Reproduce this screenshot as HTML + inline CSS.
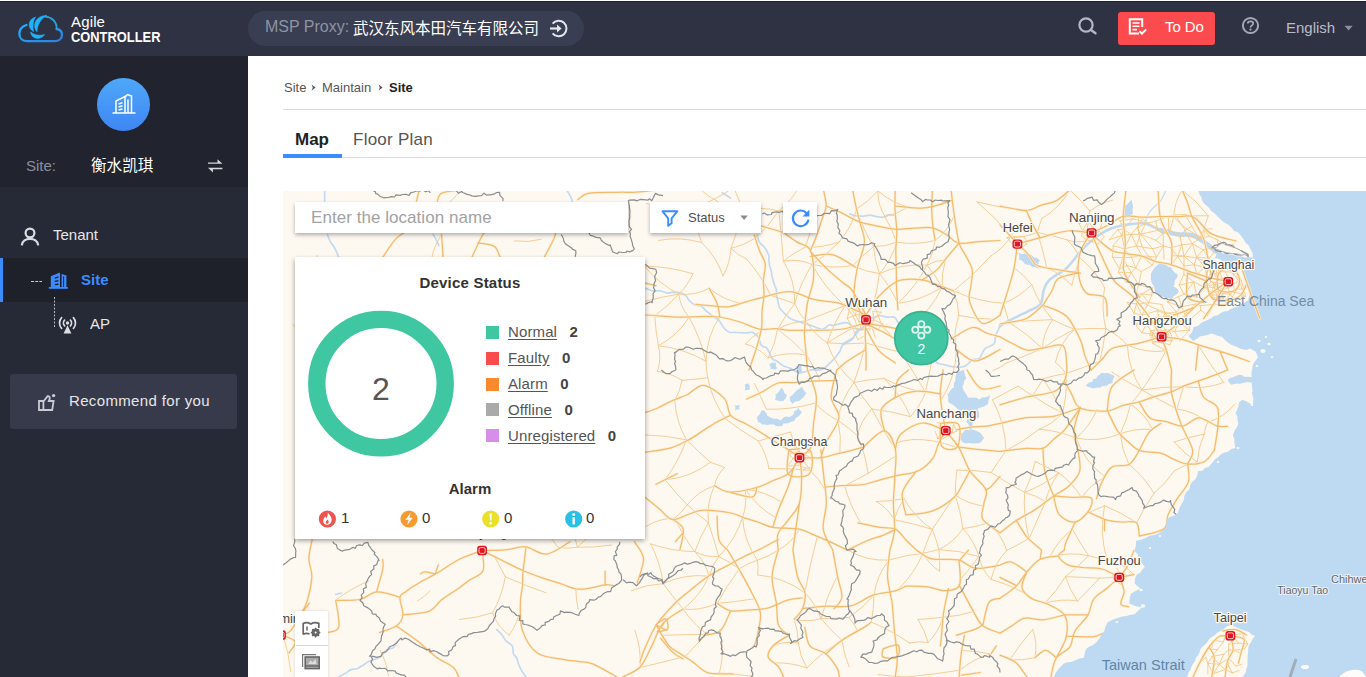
<!DOCTYPE html>
<html lang="en">
<head>
<meta charset="utf-8">
<title>Agile Controller</title>
<style>
*{box-sizing:border-box;margin:0;padding:0}
html,body{width:1366px;height:677px;overflow:hidden;background:#fff;font-family:"Liberation Sans","Noto Sans CJK SC",sans-serif;}
body{position:relative}
#topbar{position:absolute;left:0;top:1px;width:1366px;height:55px;background:#2f3243;border-top:1px solid #1f212b}
#sidebar{position:absolute;left:0;top:56px;width:248px;height:621px;background:#262936}
#sidetop{position:absolute;left:0;top:0;width:248px;height:131px;background:#21242e}
.t{position:absolute;white-space:nowrap;line-height:1}
svg{position:absolute;overflow:visible}
#pill{position:absolute;left:248px;top:11px;width:336px;height:35px;border-radius:18px;background:#3a3e52}
#todo{position:absolute;left:1118px;top:12px;width:97px;height:33px;border-radius:3px;background:#fb4b4e}
#content{position:absolute;left:248px;top:56px;width:1118px;height:621px;background:#fff}
#map{position:absolute;left:283px;top:191px;width:1083px;height:486px;background:#fdf9f1;overflow:hidden}
#mapin{position:absolute;left:0;top:-1px;width:1083px;height:487px}
.card{position:absolute;background:#fff;box-shadow:0 1px 5px rgba(0,0,0,.35)}
#avatar{position:absolute;left:97px;top:22px;width:53px;height:53px;border-radius:50%;background:linear-gradient(180deg,#4ea8f7,#3f86f5)}
#activerow{position:absolute;left:0;top:202px;width:248px;height:44px;background:#1e202a;border-left:3px solid #3b8cff}
#recbtn{position:absolute;left:10px;top:318px;width:227px;height:55px;border-radius:3px;background:#373a4b}
.leg{position:absolute;left:191px;width:13px;height:13px;margin-top:-0.5px}
.ll{position:absolute;left:213px;font-size:15px;line-height:1;color:#555;white-space:nowrap;letter-spacing:0.12px}
.ll u{text-decoration:underline;text-underline-offset:2px}
.ll b{color:#444;margin-left:12.5px}
</style>
</head>
<body>
<div id="topbar"></div>
<svg style="left:0;top:0" width="170" height="56" viewBox="0 0 170 56">
<defs><linearGradient id="lg" x1="0" y1="0" x2="1" y2="1"><stop offset="0" stop-color="#1fb2ff"/><stop offset="1" stop-color="#2b7fe0"/></linearGradient></defs>
<path d="M26.4 25 C21.5 26.6 19.4 30.2 19.4 34 C19.4 38.6 23 41.2 27.5 41.2 L54.5 41.2 C59 41.2 62 38.6 62 34.8 C62 31.6 59.6 29.4 56.6 29" fill="none" stroke="url(#lg)" stroke-width="2.3" stroke-linecap="round"/>
<path d="M56.6 29 C57.2 21.5 51 16.6 45 16.6" fill="none" stroke="#2aa3d6" stroke-width="1.8" stroke-linecap="round"/>
<path d="M35.6 17 C27.6 19.4 27.2 28 33.6 31.6 C32.4 26.4 32.8 21.2 35.6 17 Z M46.8 15.4 C35.8 15.6 31.6 25 37 31.8 C37.4 24.6 40.6 18.8 46.8 15.4 Z M30.6 32 C31.4 39.6 41 40.4 44.6 34.6 C39.6 36 34.6 35.2 30.6 32 Z" fill="#1fb2ff" stroke="#1fb2ff" stroke-width="0.6" stroke-linejoin="round"/>
</svg>
<div class="t" style="left:71px;top:14.4px;font-size:15px;color:#fff;letter-spacing:0.15px">Agile</div>
<div class="t" style="left:71px;top:30px;font-size:14px;font-weight:bold;color:#fff;transform:scaleX(.92);transform-origin:0 0">CONTROLLER</div>
<!-- PILL -->

<div id="pill"></div>
<svg style="left:548px;top:18px" width="22" height="22" viewBox="548 18 22 22">
<path d="M552.6 23.6 A7.8 7.8 0 1 1 552.6 33.4" fill="none" stroke="#e3e4ec" stroke-width="2"/>
<path d="M550 28.5 H558" stroke="#e3e4ec" stroke-width="2.2" fill="none"/>
<path d="M557 24.6 L561.6 28.5 L557 32.4 Z" fill="#e3e4ec"/>
</svg>
<div class="t" style="left:265px;top:19px;font-size:16px;color:#8f93a3">MSP Proxy:</div>
<div class="t" style="left:353px;top:20.5px;font-size:15.5px;color:#fff">武汉东风本田汽车有限公司</div>
<svg style="left:1076px;top:14px" width="24" height="24" viewBox="1076 14 24 24">
<circle cx="1086" cy="25" r="6.6" fill="none" stroke="#b4b7c4" stroke-width="2.2"/>
<path d="M1091 30 L1095.5 33.3" stroke="#b4b7c4" stroke-width="2.4" stroke-linecap="round"/>
</svg>
<svg style="left:1240px;top:15px" width="22" height="22" viewBox="1240 15 22 22">
<circle cx="1250.5" cy="25.5" r="7.6" fill="none" stroke="#a4a7b5" stroke-width="2"/>
<path d="M1247.8 23.6 C1247.8 20.6 1253.2 20.6 1253.2 23.6 C1253.2 25.4 1250.5 25.4 1250.5 27.4" fill="none" stroke="#a4a7b5" stroke-width="1.8"/>
<circle cx="1250.5" cy="29.6" r="1.1" fill="#a4a7b5"/>
</svg>
<svg style="left:1344px;top:25px" width="10" height="6" viewBox="0 0 10 6"><path d="M0.5 0.8 H8.7 L4.6 5.6 Z" fill="#8b8e9e"/></svg>
<div id="todo"></div>
<svg style="left:1127px;top:17px" width="22" height="20" viewBox="1127 17 22 20">
<path d="M1139 33.5 H1129.8 V19.2 H1142.2 V27" fill="none" stroke="#fff" stroke-width="2"/>
<path d="M1132.5 23 H1139.5 M1132.5 26.3 H1139.5 M1132.5 29.6 H1137" stroke="#fff" stroke-width="1.6" fill="none"/>
<path d="M1139.6 31.2 L1142 33.6 L1146.2 29.4" fill="none" stroke="#fff" stroke-width="2"/>
</svg>
<div class="t" style="left:1165px;top:19px;font-size:15px;color:#fff;letter-spacing:-0.1px">To Do</div>
<div class="t" style="left:1286px;top:20px;font-size:15px;color:#b9bcc8">English</div>

<div id="sidebar">
  <div id="sidetop"></div>
  <div id="avatar"></div>
  <div class="t" style="left:26px;top:101.5px;font-size:15px;color:#8b8f9c">Site:</div>
  <div class="t" style="left:91px;top:101.5px;font-size:15.6px;color:#fff">衡水凯琪</div>
  <div class="t" style="left:53px;top:171px;font-size:15px;color:#e6e6e6">Tenant</div>
  <div id="activerow"></div>
  <div class="t" style="left:81px;top:216px;font-size:15px;font-weight:bold;color:#3b8cff">Site</div>
  <div class="t" style="left:90px;top:260px;font-size:15px;color:#e6e6e6">AP</div>
  <div id="recbtn"></div>
  <div class="t" style="left:69px;top:337px;font-size:15px;color:#e6e6e6;letter-spacing:0.35px">Recommend for you</div>
  <svg style="left:0;top:0" width="248" height="621" viewBox="0 56 248 621">
<!-- avatar building -->
<g fill="none" stroke="#fff" stroke-width="1.5">
<path d="M112.5 113 H135.5"/>
<path d="M116 113 V101 L125 96.5 V113"/>
<path d="M125 97 L127.5 94.5 L131.5 96 V113"/>
<path d="M128 113 V99.5"/>
<path d="M118.5 104 L122.5 102.6 M118.5 107 L122.5 105.8 M118.5 110 L122.5 109"/>
</g>
<!-- swap -->
<g fill="#d5d6de">
<path d="M208 162.4 H217.5 V159.2 L222.4 163.8 H208 Z"/>
<path d="M222.4 169.2 H212.9 V172.4 L208 167.8 H222.4 Z"/>
</g>
<!-- tenant -->
<g fill="none" stroke="#dcdde3" stroke-width="2.2">
<circle cx="30" cy="233" r="4.4"/>
<path d="M21.8 245.3 C22.5 236.6 37.5 236.6 38.2 245.3"/>
</g>
<!-- dashes -->
<path d="M31 281.5 H42" stroke="#c8c9d0" stroke-width="1" stroke-dasharray="3 1.2"/>
<path d="M54.5 297 V327" stroke="#b8b9c2" stroke-width="1" stroke-dasharray="2 1.5"/>
<!-- site icon -->
<g fill="#3b8cff">
<rect x="48.8" y="287" width="19" height="1.8"/>
<path d="M50.8 276.2 L60 272.4 V287.5 H50.8 Z"/>
<path d="M61.6 274 L66.4 275.6 V287.5 H61.6 Z"/>
</g>
<g stroke="#1e202a" stroke-width="1.4">
<path d="M54.8 278.2 L58.4 277 M54.8 281.4 L58.4 280.6 M54.8 284.6 L58.4 284.2"/>
<path d="M63.6 276.5 V287" stroke-width="1"/>
</g>
<!-- ap icon -->
<g fill="none" stroke="#dcdde3" stroke-width="1.7" stroke-linecap="round">
<path d="M64.6 320.2 A4 4 0 0 0 64.6 325.8"/>
<path d="M70.4 320.2 A4 4 0 0 1 70.4 325.8"/>
<path d="M61.6 317.6 A8 8 0 0 0 61.6 328.4"/>
<path d="M73.4 317.6 A8 8 0 0 1 73.4 328.4"/>
</g>
<circle cx="67.5" cy="323" r="1.7" fill="#dcdde3"/>
<path d="M67.5 325.2 L63.6 333.6 H71.4 Z" fill="#dcdde3"/>
<!-- thumbs up -->
<g fill="none" stroke="#c9cad3" stroke-width="1.8">
<path d="M39 401 H43.4 V410 H39 Z"/>
<path d="M43.4 401.5 L47.6 396.2 C49.4 396 50.2 397.6 49.6 399.2 L48.8 401 H53.6 L52.2 410 H43.4"/>
</g>
<circle cx="53.6" cy="395.6" r="1.7" fill="#c9cad3"/>
</svg>
</div>
<div id="content">
  <div class="t" style="left:36px;top:24.5px;font-size:13px;color:#555">Site</div>
  <svg style="left:63px;top:28px" width="6" height="7" viewBox="0 0 6 7"><path d="M0.6 0.6 L4.6 3.5 L0.6 6.4 L1.8 3.5 Z" fill="#555"/></svg>
  <div class="t" style="left:74px;top:24.5px;font-size:13px;color:#555">Maintain</div>
  <svg style="left:130px;top:28px" width="6" height="7" viewBox="0 0 6 7"><path d="M0.6 0.6 L4.6 3.5 L0.6 6.4 L1.8 3.5 Z" fill="#555"/></svg>
  <div class="t" style="left:141px;top:24.5px;font-size:13px;color:#222;font-weight:bold">Site</div>
  <div style="position:absolute;left:35px;top:53px;width:1083px;height:1px;background:#dcdcdc"></div>
  <div class="t" style="left:47px;top:75px;font-size:17px;color:#222;font-weight:bold">Map</div>
  <div class="t" style="left:105px;top:75px;font-size:17px;color:#555;letter-spacing:0.25px">Floor Plan</div>
  <div style="position:absolute;left:35px;top:101px;width:1083px;height:1px;background:#dcdcdc"></div>
  <div style="position:absolute;left:35px;top:98px;width:59px;height:4px;background:#3b8cff"></div>
</div>
<div id="map"><div id="mapin">
<!-- MAPSVG_START -->
<svg style="left:0;top:0" width="1083" height="487" viewBox="0 0 1083 487">
<rect width="1083" height="487" fill="#fdf9f1"/>
<path d="M869.7 80.4L871.4 77.7L874 75.5L875.8 74.1L876.9 72.4L879.5 73.5L882.3 74.2L885.6 77L887.7 77.1L890.5 81.3L892.2 82.9L894.8 84.8L893.9 88L891.8 90.3L891.4 94.4L890.5 96.6L893.2 98L894.8 99.2L895.6 101.2L894.9 103.3L892.1 105.3L890.4 106.4L889.1 108.9L885.3 108.3L883.2 108.6L880.9 107.1L878.7 106.4L875.9 105.7L873.7 103.1L871.8 101.5L871.6 99.3L870.8 96.1L869.4 94L868.2 91L867.7 89.3L867.9 86.1L868 83.5ZM735.8 63L738.7 64.3L741.8 63.2L743.6 64.3L745.5 64.2L748.5 64.9L750.9 67.5L753.8 67.8L757 70.4L755.5 72.2L755.5 75.8L755.1 78.4L751.4 76.9L748.9 77.1L747.4 75L743.1 74.5L741 73.2L739.5 71L736.1 69.5L736.2 66.4ZM840.3 16.1L843.8 14.7L845.6 12.7L848.6 9.8L849.6 14L850.1 16.7L849.7 18.6L849.6 21.7L850.1 23.2L847.7 25.2L845.3 26.8L841.9 28.8L841.6 26.5L840.9 24.9L841.6 20.7L840.3 18.5ZM944.7 5.4L947.2 3.3L950.8 3.7L952.7 1.3L953.7 2.8L956 5.3L958.8 7.4L955.4 10.7L954.6 10.9L952.9 12.5L950.8 12.3L949.5 9.8L946.3 7.1ZM473.9 227.4L474.8 225.9L477 223.9L478.2 220.7L480.7 220.2L482.3 221.9L483.8 223.8L484.1 225.4L485.9 226.5L487.8 227.5L490.8 228.8L494.8 228.8L497.3 230.4L499.8 228.4L500.8 227.3L503.2 226.4L506.5 227L509.4 225.3L510.6 223.9L511 221.6L514.2 219.8L515.4 217.1L516.3 219.8L518.7 221.8L518.4 223.1L515.7 226.2L514.8 226.7L512.1 228.7L511.3 231.1L507.4 232.1L506.6 232.8L503 233.6L500.1 233.6L499.4 235.9L495.8 236.3L492.9 236L490.9 234.5L487.1 234.5L484.3 234.9L481.6 234.4L479 234.4L477 232.4L475.1 232.3ZM492.3 204.8L494.2 203.6L496.4 200.8L498.5 197.7L500.4 200.1L501.6 203.4L504 204.8L503 208L500.2 211L497.9 211.2L494.3 210.4L491.8 209.5L492.9 207.4ZM506.7 206.9L508.9 205.4L511.6 202.7L513.1 200.8L515.9 199.1L518.9 196.7L521 200.6L523.5 203.5L522.4 204.4L520.1 207.8L519.2 208.2L516.2 210.9L513.4 211.2L510.6 212.7L509.3 213.8L507 210.4ZM486.2 174.1L489.6 172.4L493.1 173L492.8 176L494.2 178.2L492.3 179.4L487.6 179.1L487.3 176.3ZM461.6 194.6L465.1 193.2L466.7 195.7L466.8 199.6L461.7 200.4L462.4 197.7ZM451.3 215.1L453 215.6L457 215L456.2 216.2L456.6 219.8L454.5 219L452.2 221L452.5 217.2ZM512.8 176.1L515.2 176.5L519.1 175.5L518.2 177.8L519.4 182.1L514 183.2L514.1 179.8ZM664.5 204.8L665.2 203.5L666.7 201.5L669 198.4L670.8 197.5L671 193L672.4 190.4L672.4 187.4L673.1 184.6L674.4 181.9L678.4 180.9L680.9 179.6L681.3 182L681.8 184.7L683.4 188.6L681 191.1L681.1 193.1L679.5 196.5L680.4 199.9L681.7 201.8L683.9 205.3L684.7 207.6L688.5 207.7L691 207.6L693.4 207.7L696.5 209.4L699.4 207.2L701.6 207.6L705.7 206.2L707.1 204.3L706.5 207.5L705.5 210.2L705 214L703.9 214.7L699.9 217.1L697.5 217.4L694.3 219L695.9 221.9L696 224.7L696.3 226.9L694.1 228.6L691.6 229.2L689.8 231L689.6 234.3L689.3 237.3L688.5 240.5L685.8 239.3L686.4 236.1L685.3 234.2L683.3 231.8L684.4 228.5L683.4 226L680.2 223.8L678.9 222.7L677.4 221.1L674.9 219.6L673.1 217.5L669.1 214.2L665.8 212.8L665.1 211L665.3 207.8ZM676.8 243.8L679.8 242.8L682.3 240.1L685.6 240.2L687.6 240.3L690.5 239.8L693.2 240.7L694.4 241.3L697.8 243.2L699.9 246.8L701.4 247.7L699.3 250.3L697.9 252.2L695.6 253.2L691.5 253.5L689.6 253.6L686.2 253.1L682.1 253.6L680.2 252.4L677.2 249.5L676.9 246.8ZM802.7 196.1L804.7 193.6L807.5 192.1L809.7 191.9L809.8 189.3L813.4 188.6L814.7 185.6L816.2 185.2L818.2 182.8L820.8 183.3L825.1 183L827.5 184.3L830.3 185.2L831.7 186.2L831.3 187.1L829.4 190.7L829.4 193L826.1 193.9L823.8 195.6L820.5 196.2L819.5 195.7L817 197.7L814.3 197.6L810.5 198.5L809.1 198L805.1 196.8ZM944.7 190.2L947 187.7L949.3 187.6L952.4 186.2L955.2 185.1L958.6 185.1L961.2 186.8L965.2 186.7L967.6 187.1L971.1 186.5L971.3 188.5L972 192.2L969.1 192.8L965.2 191.9L963.6 192.2L959.7 192.9L956.4 193.9L954.8 193.5L951.2 194.1L948.1 194.8L945.7 191.9Z" fill="#bfd9f1"/>
<path d="M439.4 2.7 L447.4 8M474 45.2C474.4 46.4 475.5 50.7 476.7 52.6C477.8 54.5 479.5 54.7 481.1 56.8C482.6 58.9 485.1 63.3 485.8 65.3C486.6 67.3 485.7 67.2 485.8 68.7C485.9 70.3 486 72.6 486.4 74.5C486.7 76.5 487.7 78.5 488.1 80.5C488.6 82.6 488.6 84.6 489.2 87C489.7 89.4 490.8 92.8 491.5 94.9C492.2 97 493 97.6 493.3 99.4C493.7 101.3 493.4 103.8 493.7 105.8C493.9 107.7 494.4 109.2 494.9 111.2C495.4 113.2 495.4 115.5 496.6 117.6C497.8 119.8 500 121.9 502 123.8C504 125.8 506 128 508.6 129.3C511.2 130.7 515.2 131.3 517.6 132.1C520 132.9 520.8 133.3 522.9 134C525.1 134.7 527.7 135.4 530.4 136.3C533.1 137.2 536.6 139.5 539.2 139.3C541.8 139.1 544.1 135.7 546 135C547.9 134.4 548.2 135.7 550.6 135.3C552.9 135 557.8 133.2 560.3 132.9C562.7 132.5 563.7 132.4 565.5 133.2C567.3 134 569 136.7 571.2 137.8C573.3 138.8 576.6 140.7 578.7 139.3C580.7 137.9 582.7 130.9 583.5 129.2M583.5 129.2C584.9 128.9 589.8 127.7 592 127.1C594.1 126.5 594.5 125.5 596.4 125.5C598.4 125.5 601.4 126.8 603.9 127.1C606.4 127.4 609.6 126.4 611.4 127.2C613.2 128 613.6 130.5 614.7 131.9C615.9 133.4 617.3 134.3 618.4 135.9C619.5 137.4 620 139.5 621.3 141.2C622.6 142.9 624.2 144.7 626.1 146.2C627.9 147.6 630.7 148.5 632.4 150.1C634 151.7 634.2 153.6 635.9 155.7C637.5 157.8 640.6 161 642.4 162.8C644.3 164.5 645.1 164.5 647.1 166.2C649.1 167.9 652.4 171.7 654.6 173.1C656.8 174.5 658.3 174 660.4 174.5C662.6 175.1 665.3 176 667.3 176.4C669.3 176.8 670.3 176.9 672.5 177C674.8 177 678.4 177.3 680.6 176.7C682.8 176.1 684.3 174.5 685.7 173.3C687.1 172.1 687.3 170.5 689.1 169.7C690.9 168.8 694.5 169.9 696.6 168.1C698.7 166.3 699.4 161.3 701.8 158.9C704.2 156.5 709.3 155.9 711.1 153.7C713 151.4 712 147.6 712.6 145.4C713.3 143.1 714.4 141.9 715.1 140.3C715.8 138.7 716.7 136.6 717 135.9M357 98.9C358 98.9 360.7 98.3 362.8 98.6C365 98.9 367.4 100.4 369.8 100.8C372.3 101.2 375 100.4 377.5 100.8C379.9 101.2 382.4 102.9 384.5 103.1C386.6 103.3 387.9 102.1 390.2 102.1C392.6 102.2 396.1 102.5 398.3 103.1C400.4 103.8 401.8 104.9 403.2 106.2C404.6 107.5 405.2 109.7 406.7 111.1C408.2 112.6 410.3 114.2 412.2 115C414.1 115.8 416.3 115 418.1 116C420 117.1 421.4 119.3 423.5 121.2C425.7 123 429 125.7 431.1 127.2C433.1 128.7 434 128.1 435.7 130C437.4 131.8 439.4 136.3 441.2 138.3C443 140.4 444.3 141.6 446.3 142.2C448.3 142.9 450.4 142.2 453.2 142.4C455.9 142.5 460.1 142.9 462.8 143C465.5 143 467.3 141.7 469.4 142.4C471.5 143.1 473.8 144.9 475.3 147.1C476.8 149.2 477 153.7 478.4 155.5C479.7 157.3 482.2 156.5 483.6 157.9C485 159.4 485.9 162.3 486.9 164.1C487.9 166 488.3 167.9 489.6 169.1C490.8 170.3 492.7 170.3 494.5 171.5C496.3 172.6 498.1 174.7 500.3 175.8C502.5 177 505.7 177.4 507.9 178.5C510 179.5 511.7 181.3 513.4 182C515.1 182.8 515.8 183.1 517.8 182.9C519.8 182.7 523.5 181.2 525.4 180.7C527.3 180.2 527.5 179.9 529.3 179.8C531.2 179.7 534.4 180.5 536.5 180.1C538.7 179.8 540.2 178.9 542.2 177.5C544.2 176 547.1 172.8 548.7 171.3C550.2 169.8 550.2 170.2 551.6 168.5C553 166.8 555.7 163.1 557 161C558.3 158.9 557.6 157.5 559.2 155.9C560.7 154.3 564.3 152.6 566.2 151.4C568 150.1 569 149.9 570.2 148.2C571.4 146.6 571.9 143.1 573.5 141.3C575.1 139.5 578.3 138.8 579.9 137.3C581.4 135.7 582.5 132.8 583 131.9M577.7 138.3C576.9 139.3 574.4 142.6 573 144.2C571.6 145.9 571.5 146.6 569.2 148.2C566.8 149.9 560.7 153.2 559.1 154.2M567 23.9C567.8 24.2 569.5 25.2 571.8 25.6C574 25.9 578.2 26.2 580.7 26.1C583.2 26 585.2 25.1 587 25.2C588.8 25.2 589.3 25.8 591.5 26.2C593.7 26.5 598 27.5 600.3 27.3C602.6 27.1 603.3 25.2 605.3 24.8C607.2 24.5 611.1 25.2 612.2 25.3M41.7 0 L41.7 11.1M44.5 44.5C44.9 45.7 45.9 49.3 47.1 51.4C48.2 53.6 49.9 54.9 51.4 57.5C52.8 60 54.9 65.2 55.6 66.8M150.2 44.5C150.8 45.6 153 48.9 153.9 50.8C154.8 52.6 155.5 54.8 155.8 55.6M283.7 0C284.4 1.1 286.6 4.5 287.5 6.4C288.4 8.2 289 10.3 289.3 11.1M213.8 439.6C214.6 440.5 217.4 443 219 444.9C220.5 446.8 221.3 449 223 450.9C224.7 452.7 228 453.7 229.3 455.9C230.5 458 229.7 461.8 230.4 463.7C231.1 465.7 232.6 465.7 233.5 467.5C234.4 469.4 234.8 472.4 235.8 474.9C236.8 477.3 238.4 480.3 239.6 482.3C240.8 484.3 242.5 486.2 243 487M114.2 451.3C113.6 452.3 112.2 456.2 110.5 457.6C108.7 459 105.8 458.4 103.7 459.8C101.7 461.2 100 464.4 98.4 465.9C96.7 467.4 95.7 467.7 93.6 468.7C91.5 469.6 87.8 470.4 85.6 471.5C83.3 472.6 82.1 474 80.2 475.2C78.2 476.4 76 477.9 74 478.7C71.9 479.4 69.7 478.9 67.8 479.6C65.9 480.4 64.6 482 62.5 483.3C60.5 484.5 56.8 486.4 55.6 487M52.7 404.4 L58.6 403" fill="none" stroke="#c3daf1" stroke-width="1.7" stroke-linecap="round"/>
<path d="M717 136.1C718.1 135.4 720.7 133.6 723.6 132C726.5 130.4 730.7 128.4 734.2 126.6C737.7 124.8 741 123.4 744.9 121.3C748.7 119.2 754.6 117.7 757.3 114.2C760 110.6 759.3 104.1 760.8 100C762.4 95.9 762.7 93.5 766.6 89.8C770.4 86 778.8 82.4 784 77.7C789.1 73 793.4 66.1 797.4 61.6C801.4 57.2 803.6 54.5 808.1 50.9C812.6 47.3 818.4 42.9 824.2 40.2C830 37.5 836.7 35.9 842.9 34.8C849.2 33.7 855.9 32.6 861.7 33.5C867.5 34.4 872.4 38.4 877.8 40.2C883.1 42 888.5 43.3 893.8 44.2C899.2 45.1 905 44 909.9 45.5C914.8 47.1 919.7 51.1 923.3 53.6C926.9 56 928.7 58.3 931.3 60.3C934 62.3 938 64.8 939.4 65.6" fill="none" stroke="#c2daf1" stroke-width="2.6" stroke-linecap="round"/>
<path d="M877.8 40.2C880.4 40.9 888.5 43.3 893.8 44.2C899.2 45.1 905 44 909.9 45.5C914.8 47.1 919.7 51.1 923.3 53.6C926.9 56 928.7 58.3 931.3 60.3C934 62.3 938 64.8 939.4 65.6" fill="none" stroke="#bfd9f1" stroke-width="4.5" stroke-linecap="round"/>
<path d="M861.7 33.5C862.6 31.5 864.4 25.2 867 21.4C869.7 17.6 875.1 14.3 877.8 10.7C880.4 7.1 882.2 1.8 883.1 0" fill="none" stroke="#c6dcf1" stroke-width="1.3"/>
<path d="M178 0Q172.2 7.4 165.2 13.6M408.7 -10.8Q417.5 1.9 431 9.3M450.7 -2.5Q468.6 -0.4 485.4 -6.9M450.7 -2.5Q441.3 4.1 431 9.3M450.7 -2.5Q456 8.7 459.5 20.5M485.4 -6.9Q501.8 -9.6 518 -6.4M518 -6.4Q509.9 9.6 495.8 20.9M594.9 0.9Q585.4 11.3 573.7 19.1M594.9 0.9Q594.5 15 602.1 26.8M594.9 0.9Q608.3 12.6 625.5 17.3M786.7 0Q776.7 18.1 758.8 28.6M786.7 0Q797.7 9.6 806.9 21M899.2 0Q891.3 12.2 890.6 26.8M899.2 0Q914.1 11 925.2 25.8M311.3 21.8Q320.2 24.2 327.7 29.5M363.2 13.4Q385.6 21.1 408.5 14.9M408.5 14.9Q420.5 15.2 431 9.3M408.5 14.9Q411.6 34.3 418.6 52.5M431 9.3Q443.9 18.3 459.5 20.5M459.5 20.5Q477.7 16 495.8 20.9M459.5 20.5Q455.1 39.9 448 58.4M495.8 20.9Q513.6 17.3 531.7 17.7M495.8 20.9Q486 36.2 472.4 48.1M495.8 20.9Q498.5 46 500.4 71.2M531.7 17.7Q530.1 38.4 521.8 57.4M573.7 19.1Q568.6 37.5 556.2 51.9M573.7 19.1Q579.7 38.9 590.5 56.6M602.1 26.8Q614.4 23.5 625.5 17.3M602.1 26.8Q609 39 613.6 52.2M670.7 26.6Q664.8 41.2 652.1 50.5M694 11.9Q717.2 17.6 740.8 20.8M694 11.9Q712.9 27.3 727.9 46.6M758.8 28.6Q756.2 35.3 754.2 42.3M806.9 21Q817.2 13.2 829.8 10M806.9 21Q804.1 35.8 803.5 50.9M855.9 26.8Q853.3 41.7 858.9 55.8M855.9 26.8Q869.7 36.9 884.9 44.7M890.6 26.8Q907.9 25.3 925.2 25.8M890.6 26.8Q889 36.1 884.9 44.7M890.6 26.8Q903 41.2 920.6 48.2M925.2 25.8Q920 36.4 920.6 48.2M158.6 44.5Q147.7 60.4 147.4 79.6M231.6 50.9Q245.1 52.8 258.2 49.3M375.5 50.4Q397.3 46.3 418.6 52.5M418.6 52.5Q433.5 66.6 440.1 86M448 58.4Q461.1 55.4 472.4 48.1M448 58.4Q447.1 73.1 440.1 86M448 58.4Q454.6 65.5 463.6 68.9M521.8 57.4Q539.6 57.9 556.2 51.9M521.8 57.4Q510.2 62.8 500.4 71.2M556.2 51.9Q543.9 64.7 529.2 74.4M590.5 56.6Q602.5 56.9 613.6 52.2M590.5 56.6Q579.7 65.6 569.7 75.6M590.5 56.6Q591.7 70.5 596.4 83.6M613.6 52.2Q633 55.4 652.1 50.5M613.6 52.2Q608.8 69.9 596.4 83.6M652.1 50.5Q650.2 63.5 644.1 75.1M727.9 46.6Q741.7 48.1 754.2 42.3M727.9 46.6Q720.1 58.7 707.7 66M754.2 42.3Q769.2 45.3 783.8 49.8M754.2 42.3Q760.1 59.5 763.7 77.3M783.8 49.8Q793.5 53.4 803.5 50.9M783.8 49.8Q792.4 57.2 796.6 67.7M858.9 55.8Q862.5 64.9 870.8 70.2M34.1 65.4Q33.2 82 27.7 97.8M68.1 80Q83.7 72.3 100.1 66.8M277.2 85.2Q286.2 98.4 289.8 113.9M311.9 73.6Q315.7 89.8 317.3 106.4M361.5 76.1Q386.3 76.5 409.9 83.8M361.5 76.1Q355.8 93.7 361.3 111.4M361.5 76.1Q375.6 93.7 395.8 104M409.9 83.8Q404.9 95.4 395.8 104M463.6 68.9Q478 85.6 487.9 105.4M500.4 71.2Q515.3 68.3 529.2 74.4M500.4 71.2Q512.7 90.6 511.7 113.6M529.2 74.4Q549.3 79.1 569.7 75.6M529.2 74.4Q517.5 92.7 511.7 113.6M529.2 74.4Q541.6 98.2 562.1 115.7M569.7 75.6Q582.4 81.9 596.4 83.6M596.4 83.6Q619.2 73.2 644.1 75.1M596.4 83.6Q594.5 99.1 590.6 114.3M596.4 83.6Q608 97.1 614.7 113.5M644.1 75.1Q652.6 69.8 662.5 70.1M644.1 75.1Q632.8 96.9 614.7 113.5M644.1 75.1Q652.5 85.5 659.1 97.2M662.5 70.1Q658.1 83.3 659.1 97.2M707.7 66Q690.9 85.3 670.7 101M730.8 77.4Q740.8 84.9 748.7 94.5M763.7 77.3Q777.9 84 788.8 95.2M796.6 67.7Q792.3 81.4 788.8 95.2M796.6 67.7Q812.2 80.1 821.6 97.6M888.5 65.8Q911.9 64 932.2 75.9M51 101.4Q72.5 99.4 93.3 105.3M124.5 110.5Q130.1 125.4 132.1 141.3M230.5 109.7Q238.9 108.5 245.9 103.8M361.3 111.4Q378.4 107.1 395.8 104M395.8 104Q411.8 106 426.1 98.4M395.8 104Q385.1 116.3 371.7 125.7M395.8 104Q397.3 117.3 406.1 127.3M426.1 98.4Q439.9 109.6 457.1 113.4M487.9 105.4Q499.8 109.4 511.7 113.6M511.7 113.6Q502 125.7 494.7 139.3M511.7 113.6Q515.4 123.5 522.8 130.9M562.1 115.7Q542.4 123.2 522.8 130.9M562.1 115.7Q570.8 124 574 135.8M562.1 115.7Q550.6 133 544.2 152.8M590.6 114.3Q595.2 125.3 599.2 136.5M614.7 113.5Q638.8 110.5 659.1 97.2M659.1 97.2Q648.2 121.1 626.7 136.1M670.7 101Q694.5 111.7 720.6 113.3M670.7 101Q675.3 112.8 675.9 125.4M720.6 113.3Q736.8 107.1 748.7 94.5M720.6 113.3Q723 122.8 725.9 132.2M748.7 94.5Q755.8 114 769.6 129.6M821.6 97.6Q817.8 118.3 822.8 138.6M848.6 105.1Q867.9 119.7 891.5 124.8M9.6 134.1Q18.6 146.8 30.8 156.4M334.3 140.2Q343.5 152.7 350.9 166.3M371.7 125.7Q372.6 140.8 375.4 155.7M406.1 127.3Q394.7 145.8 375.4 155.7M406.1 127.3Q417.6 148.1 423 171.3M436.8 126.3Q423.3 146.8 423 171.3M477.4 141.3Q469.2 146.7 462.3 153.8M494.7 139.3Q507.8 131.8 522.8 130.9M494.7 139.3Q492.2 154.4 485.1 167.9M494.7 139.3Q510.4 150.7 523.5 165M522.8 130.9Q531 144.3 544.2 152.8M574 135.8Q558.8 143.8 544.2 152.8M599.2 136.5Q612.1 147 618.1 162.6M675.9 125.4Q692 129.1 708.5 129.2M675.9 125.4Q669.7 142.1 673.4 159.5M725.9 132.2Q747.7 130.5 769.6 129.6M725.9 132.2Q744.2 143.4 759.4 158.5M769.6 129.6Q780.2 135.2 791.4 139.3M769.6 129.6Q760.1 142.5 759.4 158.5M791.4 139.3Q807.1 137.9 822.8 138.6M791.4 139.3Q774.5 147.4 759.4 158.5M791.4 139.3Q776.7 152.7 772.4 172.2M822.8 138.6Q820.8 155.1 816.7 171.3M822.8 138.6Q835.1 144.9 844.4 155.1M856.2 133.8Q873 126 891.5 124.8M61.3 169.1Q65.8 180.8 75.3 188.9M294.3 160.5Q309.5 153.2 326.4 154M326.4 154Q318.3 176 307.8 196.8M375.4 155.7Q400.9 158.3 423 171.3M375.4 155.7Q378.8 168.8 374.4 181.5M423 171.3Q423.1 179.6 424.7 187.8M462.3 153.8Q475.8 157.6 485.1 167.9M485.1 167.9Q503.9 161.3 523.5 165M523.5 165Q531.7 177.1 537.1 190.6M544.2 152.8Q563.4 154.8 582.7 153M544.2 152.8Q551.9 176.5 571 192.5M582.7 153Q600.4 157.8 618.1 162.6M582.7 153Q578.2 173.2 571 192.5M618.1 162.6Q634.2 156 651.5 154.5M618.1 162.6Q630.6 182.2 642.5 202.3M651.5 154.5Q647.8 178.5 642.5 202.3M673.4 159.5Q673 186.9 658.3 210.1M723.5 173Q741.7 166.3 759.4 158.5M723.5 173Q717.4 178 710.1 180.5M772.4 172.2Q778.7 177 783.1 183.6M816.7 171.3Q799.9 177.6 783.1 183.6M844.4 155.1Q862.9 163.7 883.1 160.8M844.4 155.1Q845.1 179.7 859 199.9M883.1 160.8Q872.7 181.3 859 199.9M915.3 155.4Q927 174.7 940.8 192.5M107.7 191.1Q104.7 205 98.8 217.9M244.4 188.9Q260.4 198.8 279.2 199.3M374.4 181.5Q387.8 182.9 399 190.3M399 190.3Q411.9 189.5 424.7 187.8M399 190.3Q397.3 201 391.8 210.5M424.7 187.8Q429 210 442.1 228.4M471.6 193.7Q477.7 206.3 483.4 219.2M571 192.5Q586 189.3 601.2 188.5M571 192.5Q557.8 209.3 554.9 230.5M571 192.5Q578.4 206.8 588.9 219M601.2 188.5Q620.6 199.1 642.5 202.3M601.2 188.5Q618.4 204.8 627.5 226.6M642.5 202.3Q637.3 215.9 627.5 226.6M735 196.2Q722.2 202.9 709.5 209.8M735 196.2Q742.2 201.3 749.7 205.6M760.1 188.8Q771.4 185.2 783.1 183.6M760.1 188.8Q755.1 197.3 749.7 205.6M760.1 188.8Q771.7 204.8 779.5 222.9M783.1 183.6Q784.7 203.5 779.5 222.9M828.8 182.1Q843.5 191.7 859 199.9M859 199.9Q879.6 196.7 900.4 196.7M859 199.9Q853.6 207.4 847.6 214.3M859 199.9Q876.1 210 893.8 218.9M900.4 196.7Q921.1 199.9 940.8 192.5M900.4 196.7Q897.2 207.8 893.8 218.9M191.4 221Q198.2 231.3 207.2 239.6M391.8 210.5Q392.9 231.5 403.4 249.9M442.1 228.4Q457.9 240.9 475.3 251.1M483.4 219.2Q508.2 219.9 532.1 213.2M532.1 213.2Q542 223.9 554.9 230.5M554.9 230.5Q565.3 237.2 574.3 245.5M554.9 230.5Q558.7 246.6 556.9 263M588.9 219Q608.5 221.2 627.5 226.6M588.9 219Q577.8 230.2 574.3 245.5M588.9 219Q598.3 237.1 609.2 254.4M709.5 209.8Q722.5 233.5 723 260.6M749.7 205.6Q763.8 215.7 779.5 222.9M779.5 222.9Q770 234 756.2 239.2M814.1 219.2Q807.2 236.2 793.2 248.1M847.6 214.3Q844.2 229.7 837.3 243.7M847.6 214.3Q862.2 223.9 869.7 239.6M893.8 218.9Q911.1 221.3 924.7 232.2M924.7 232.2Q941.2 227.3 952.2 213.9M924.7 232.2Q921.6 237.8 921.3 244.1M166.5 246.7Q170.3 262.8 182.5 274.1M207.2 239.6Q222.9 242.9 238.4 239M238.4 239Q232.9 259.2 218 274.1M261.4 252.3Q282.9 245.3 304.6 251.3M261.4 252.3Q274.8 262.5 280.3 278.5M333.7 247.9Q347.9 241.7 363.1 245M333.7 247.9Q343.8 266 360.4 278.5M363.1 245Q383.5 245.3 403.4 249.9M403.4 249.9Q395.8 271.4 382.1 289.8M403.4 249.9Q415.2 261.3 427.4 272.3M475.3 251.1Q491.2 246.1 507.4 242.1M475.3 251.1Q483.5 263.7 486 278.6M507.4 242.1Q513.8 263 527.2 280.3M574.3 245.5Q582.6 263.7 585 283.4M609.2 254.4Q619 250.3 629.7 249.5M629.7 249.5Q651.3 248.9 671.5 256.8M723 260.6Q740.8 251.8 756.2 239.2M723 260.6Q715.3 271.4 708.2 282.5M756.2 239.2Q775.4 240.7 793.2 248.1M793.2 248.1Q815.9 252.8 837.3 243.7M793.2 248.1Q801.7 272.2 822.4 287.2M837.3 243.7Q853 237.9 869.7 239.6M837.3 243.7Q838.7 259.5 845.6 273.8M891.2 252Q905.9 246.9 921.3 244.1M891.2 252Q901.1 263.8 914.2 272.2M921.3 244.1Q914.9 257.4 914.2 272.2M65.1 275.7Q80.8 278.5 95.7 272.8M95.7 272.8Q107 271.7 118 274.9M95.7 272.8Q97.9 286 103.8 298M280.3 278.5Q273.6 292.7 260.8 301.6M326.5 278Q334.5 288.4 342.6 298.8M382.1 289.8Q407.4 287.9 427.4 272.3M382.1 289.8Q392.4 303 404.3 314.8M427.4 272.3Q434.5 274.7 441.5 277.4M441.5 277.4Q433.7 285 431.4 295.7M486 278.6Q506.6 278.1 527.2 280.3M527.2 280.3Q536.3 288.6 541.8 299.6M585 283.4Q598.6 274.9 612.2 266.4M585 283.4Q573.5 289.8 561.7 295.7M673.9 280.1Q691.1 279.8 708.2 282.5M673.9 280.1Q672.1 292.4 672.3 305M708.2 282.5Q724.4 293.3 741.6 302.3M752.3 271.5Q763.9 277.5 775.8 282.9M752.3 271.5Q748.6 287.5 741.6 302.3M775.8 282.9Q760.4 295.6 741.6 302.3M775.8 282.9Q766 295.8 762.5 311.7M775.8 282.9Q790 293 798.7 307.9M822.4 287.2Q807.3 293.9 798.7 307.9M845.6 273.8Q860.9 286.4 871.1 303.3M891.3 280.9Q901.8 274 914.2 272.2M891.3 280.9Q882.8 293.5 871.1 303.3M103.8 298Q112.9 315.7 116.9 335.3M260.8 301.6Q272.6 318.4 291.8 325.7M342.6 298.8Q353.4 301.1 362.3 307.6M404.3 314.8Q415 301.1 431.4 295.7M404.3 314.8Q398.9 322.1 392.1 328.1M404.3 314.8Q414.2 324.5 425.4 332.7M431.4 295.7Q423.3 313.3 425.4 332.7M462.2 299.4Q482 300.7 498.3 312.2M462.2 299.4Q464.4 313.7 459.6 327.4M462.2 299.4Q474 317.1 492.6 327.6M561.7 295.7Q566.8 315.9 578.1 333.5M593.3 311.5Q607.2 311.2 621 308.8M593.3 311.5Q604.8 318 611.2 329.6M621 308.8Q614.3 318.3 611.2 329.6M621 308.8Q631.5 327.4 649.3 339.3M672.3 305Q685.2 314.5 701.2 315.9M672.3 305Q660.9 322.2 649.3 339.3M672.3 305Q677.7 321.4 679.9 338.6M741.6 302.3Q752.9 305.2 762.5 311.7M741.6 302.3Q739.9 325.8 746.2 348.4M762.5 311.7Q754.2 330 746.2 348.4M821.6 315.7Q810.2 319.7 800.1 326.3M821.6 315.7Q838.5 322.5 853.6 332.7M821.6 315.7Q815.8 342.7 824 369.1M871.1 303.3Q861.3 317.3 853.6 332.7M228.6 341.6Q237.3 336.3 244.8 329.5M244.8 329.5Q263.4 339.8 275.3 357.6M291.8 325.7Q289.1 341.8 294.5 357.2M319.6 333.8Q306.8 345.3 294.5 357.2M363 336.4Q376.4 328.1 392.1 328.1M392.1 328.1Q399.5 346.3 411.8 361.6M425.4 332.7Q417.2 346.5 411.8 361.6M425.4 332.7Q431 349.4 435.8 366.5M459.6 327.4Q452.6 349.9 435.8 366.5M459.6 327.4Q460.7 351 474.4 370.3M516.5 339.5Q508.8 352.8 495.3 360.1M611.2 329.6Q630.5 333.6 649.3 339.3M649.3 339.3Q644 351.1 639.9 363.3M649.3 339.3Q653.2 349.2 655.9 359.5M679.9 338.6Q692.7 337.2 704.8 332.9M679.9 338.6Q670.9 352.6 655.9 359.5M679.9 338.6Q691.3 350.7 696 366.5M704.8 332.9Q718.6 343.8 723.8 360.5M746.2 348.4Q735.2 354.7 723.8 360.5M789.3 339Q774.8 350.6 766.6 367.3M789.3 339Q796.7 352.8 805.7 365.7M210.8 365.5Q216.9 376 222.3 386.8M275.3 357.6Q284.9 359.1 294.5 357.2M294.5 357.2Q311.8 357.8 329 355M367.5 353.8Q388.9 361.5 411.8 361.6M367.5 353.8Q377.4 372.5 380.3 393.6M411.8 361.6Q423 367.8 435.8 366.5M411.8 361.6Q422.4 371.9 426.1 386.2M435.8 366.5Q428.9 375.4 426.1 386.2M435.8 366.5Q446.5 371.9 456.4 378.8M474.4 370.3Q485.5 366.6 495.3 360.1M474.4 370.3Q464.7 373.1 456.4 378.8M474.4 370.3Q475.7 377.6 474.7 384.9M534.3 346.6Q526.9 374.4 521.8 402.7M564.4 360Q583.6 371.5 605.9 370.1M605.9 370.1Q622.5 364.8 639.9 363.3M605.9 370.1Q593.4 385.6 591 405.4M639.9 363.3Q647.9 361.6 655.9 359.5M639.9 363.3Q631.6 383.6 615.8 398.7M639.9 363.3Q646 374.4 656.7 381.3M655.9 359.5Q676.4 360.3 696 366.5M655.9 359.5Q656.9 370.4 656.7 381.3M696 366.5Q686.4 379.2 676.1 391.3M696 366.5Q698.5 379.9 708.1 389.4M723.8 360.5Q711.8 372.7 708.1 389.4M766.6 367.3Q785.9 361.2 805.7 365.7M805.7 365.7Q814.6 368.5 824 369.1M805.7 365.7Q794.9 377.1 782.4 386.7M824 369.1Q839.9 372.8 851 384.7M52.7 410.3Q67.8 398 85.9 391.1M147 400.8Q141.7 407 134.6 410.9M222.3 386.8Q242.3 395.7 263 402.8M222.3 386.8Q219.2 405.9 209.6 422.8M292.8 398.6Q292.8 409.2 295.2 419.5M348.3 400.7Q363.7 394.3 380.3 393.6M380.3 393.6Q402.2 383.3 426.1 386.2M380.3 393.6Q389.8 406.6 400 419.1M426.1 386.2Q417.3 406 400 419.1M456.4 378.8Q444.1 395.4 434.1 413.4M474.7 384.9Q500.8 387.2 521.8 402.7M521.8 402.7Q532.7 414 538.1 428.7M553.8 386.8Q543.3 406.8 538.1 428.7M591 405.4Q579.9 418.1 565.8 427.4M591 405.4Q590.9 418.8 588.3 432M708.1 389.4Q728.9 395.2 747 406.7M782.4 386.7Q799.5 387.2 816.5 388.2M782.4 386.7Q773.8 401.2 762 413.1M782.4 386.7Q786.6 399.9 794.6 411M816.5 388.2Q833.9 388.2 851 384.7M816.5 388.2Q805.6 399.6 794.6 411M41 429.6Q37.2 438.8 30.4 446.2M176.5 429.5Q193.4 428.1 209.6 422.8M209.6 422.8Q214.3 436.6 226 445.2M237.6 416.5Q235.7 432.5 226 445.2M400 419.1Q417.9 421 434.1 413.4M400 419.1Q409.9 433.6 424 444.2M434.1 413.4Q452.6 412 470.9 408.8M511.2 429.3Q524.8 432.5 538.1 428.7M511.2 429.3Q515.3 440.8 515.2 452.9M538.1 428.7Q552 428.4 565.8 427.4M538.1 428.7Q547.7 440.5 559.1 450.6M565.8 427.4Q571.7 433.7 575 441.7M588.3 432Q608.5 440.5 626.4 453M635 429.5Q647.4 428.8 659.8 427.2M635 429.5Q641.8 440.2 645.1 452.4M659.8 427.2Q675.9 426.5 691.1 421.3M659.8 427.2Q656 441.9 645.1 452.4M762 413.1Q778.1 408.3 794.6 411M0 445.4Q5.9 462.9 7.7 481.3M97.4 460.3Q103.6 472.3 105.6 485.7M351.8 440.1Q358.4 458.3 357.2 477.6M379.6 445.3Q401.8 444.7 424 444.2M424 444.2Q412.6 454.9 402.2 466.5M436.8 439.9Q442.4 461.5 436.4 483M489.9 455.9Q502.1 450.6 515.2 452.9M515.2 452.9Q516.8 466.4 523.9 478M559.1 450.6Q539.3 461.5 523.9 478M559.1 450.6Q560.7 464.2 566.1 476.8M626.4 453Q635.7 450.6 645.1 452.4M679.5 460.5Q693.8 461.1 708 463.9M749.7 439.4Q737.2 453.9 726.6 469.9M749.7 439.4Q755 453.2 751.8 467.8M357.2 477.6Q379.8 472.2 402.2 466.5M436.4 483Q453.3 484.4 470.1 486.3M491 472.9Q507.9 472.2 523.9 478M595.3 484.6Q609.6 486.6 624.1 487M624.1 487Q650.6 484.3 676.9 480.2M676.9 480.2Q690.5 468.4 708 463.9M726.6 469.9Q739.4 470.5 751.8 467.8" fill="none" stroke="#f6cd97" stroke-width="1" stroke-linecap="round"/>
<path d="M837 30.9L849.8 28.9M837 30.9L840.5 39.2M849.8 28.9L858.4 30.8M849.8 28.9L840.5 39.2M858.4 30.8L854 37.7M858.4 30.8L862.4 33.8M872.9 31L885.4 26.1M872.9 31L862.4 33.8M872.9 31L874.7 40.4M885.4 26.1L892.5 25.1M885.4 26.1L885.8 39M892.5 25.1L901.9 24.4M892.5 25.1L902.1 40.3M901.9 24.4L914.1 28.3M901.9 24.4L908.9 36.1M914.1 28.3L921.2 39.1M834.8 39.6L840.5 39.2M834.8 39.6L826.3 49.8M834.8 39.6L838.8 45.3M840.5 39.2L838.8 45.3M840.5 39.2L848.2 44.4M854 37.7L862.4 33.8M854 37.7L848.2 44.4M854 37.7L857.4 44.2M862.4 33.8L857.4 44.2M874.7 40.4L857.4 44.2M874.7 40.4L880 43.4M885.8 39L880 43.4M885.8 39L897 47M902.1 40.3L908.9 36.1M902.1 40.3L897 47M902.1 40.3L903.8 44.8M908.9 36.1L916.2 49.1M921.2 39.1L929.2 38.9M921.2 39.1L916.2 49.1M921.2 39.1L926.2 46.1M826.3 49.8L838.8 45.3M838.8 45.3L848.2 44.4M838.8 45.3L830.1 55.8M838.8 45.3L841.5 58.8M848.2 44.4L857.4 44.2M848.2 44.4L841.5 58.8M848.2 44.4L853.5 55.9M857.4 44.2L872.9 50.3M857.4 44.2L853.5 55.9M857.4 44.2L869.6 58.8M872.9 50.3L880 43.4M872.9 50.3L880.5 55.9M880 43.4L880.5 55.9M897 47L903.8 44.8M897 47L898.8 54.8M903.8 44.8L916.2 49.1M903.8 44.8L909.3 53.7M916.2 49.1L926.2 46.1M916.2 49.1L909.3 53.7M926.2 46.1L934.3 49.7M934.3 49.7L935.3 57.2M934.3 49.7L943 55.1M830.1 55.8L841.5 58.8M830.1 55.8L829.5 67.3M841.5 58.8L853.5 55.9M841.5 58.8L839.7 67.7M841.5 58.8L848.5 67.3M853.5 55.9L869.6 58.8M853.5 55.9L858.9 65.7M869.6 58.8L880.5 55.9M869.6 58.8L873.5 67.2M880.5 55.9L887.9 57.9M880.5 55.9L873.5 67.2M880.5 55.9L881 69.1M887.9 57.9L898.8 54.8M887.9 57.9L894.6 66.4M898.8 54.8L909.3 53.7M898.8 54.8L894.6 66.4M898.8 54.8L901 66.2M909.3 53.7L920.1 59.8M909.3 53.7L901 66.2M909.3 53.7L913.7 67.1M920.1 59.8L935.3 57.2M920.1 59.8L913.7 67.1M920.1 59.8L926.2 68.1M935.3 57.2L943 55.1M935.3 57.2L926.2 68.1M943 55.1L951 54.6M829.5 67.3L839.7 67.7M829.5 67.3L836.5 78.7M839.7 67.7L848.5 67.3M839.7 67.7L836.5 78.7M839.7 67.7L844.1 75.6M848.5 67.3L858.9 65.7M848.5 67.3L852.6 77.9M858.9 65.7L873.5 67.2M858.9 65.7L852.6 77.9M858.9 65.7L869.2 75.3M873.5 67.2L869.2 75.3M894.6 66.4L901 66.2M894.6 66.4L889.7 73M894.6 66.4L901 76M901 66.2L901 76M901 66.2L911.2 74.8M913.7 67.1L926.2 68.1M913.7 67.1L911.2 74.8M913.7 67.1L921.9 77.4M926.2 68.1L921.9 77.4M926.2 68.1L933 77M836.5 78.7L844.1 75.6M836.5 78.7L835.3 82.3M844.1 75.6L852.6 77.9M844.1 75.6L848.2 82.7M852.6 77.9L848.2 82.7M852.6 77.9L858.3 81.6M869.2 75.3L858.3 81.6M901 76L911.2 74.8M901 76L900.9 84.3M911.2 74.8L921.9 77.4M911.2 74.8L913.9 84.3M921.9 77.4L933 77M921.9 77.4L913.9 84.3M921.9 77.4L923.7 87.4M933 77L936.6 81.6M835.3 82.3L848.2 82.7M835.3 82.3L843.1 92M848.2 82.7L843.1 92M848.2 82.7L855.7 95M858.3 81.6L855.7 95M900.9 84.3L896.2 95M900.9 84.3L910.8 92M913.9 84.3L923.7 87.4M923.7 87.4L936.6 81.6M923.7 87.4L921.9 97.4M923.7 87.4L931.1 94.1M936.6 81.6L949.3 82M936.6 81.6L941 93M949.3 82L957.4 93.7M843.1 92L855.7 95M855.7 95L869.3 98M855.7 95L853 104.1M869.3 98L858.9 104M869.3 98L868.8 105M896.2 95L910.8 92M896.2 95L901 104.4M910.8 92L921.9 97.4M910.8 92L901 104.4M910.8 92L913.9 107.3M921.9 97.4L931.1 94.1M921.9 97.4L913.9 107.3M921.9 97.4L928.5 102.3M931.1 94.1L941 93M931.1 94.1L928.5 102.3M931.1 94.1L935.8 101.6M957.4 93.7L952 102.6M957.4 93.7L960.3 103.9M853 104.1L858.9 104M853 104.1L853.5 113.9M858.9 104L868.8 105M858.9 104L853.5 113.9M858.9 104L865.7 112.7M868.8 105L865.7 112.7M895.5 106.5L901 104.4M895.5 106.5L884.6 111.9M895.5 106.5L898.7 116.7M901 104.4L913.9 107.3M928.5 102.3L935.8 101.6M928.5 102.3L931.5 114.2M935.8 101.6L952 102.6M935.8 101.6L931.5 114.2M935.8 101.6L944.5 114.7M952 102.6L960.3 103.9M952 102.6L944.5 114.7M844.2 112.5L853.5 113.9M844.2 112.5L850.9 122.8M853.5 113.9L865.7 112.7M853.5 113.9L850.9 122.8M853.5 113.9L858.9 125.3M865.7 112.7L878.8 114.4M865.7 112.7L858.9 125.3M878.8 114.4L882.3 123.6M884.6 111.9L898.7 116.7M884.6 111.9L893.5 122M898.7 116.7L912.8 114M898.7 116.7L893.5 122M898.7 116.7L902 123.9M912.8 114L917.5 115.7M912.8 114L902 123.9M917.5 115.7L931.5 114.2M917.5 115.7L917.8 120.1M931.5 114.2L944.5 114.7M931.5 114.2L924.5 125.6M850.9 122.8L858.9 125.3M850.9 122.8L853.5 135.9M858.9 125.3L874.5 120.7M858.9 125.3L853.5 135.9M874.5 120.7L882.3 123.6M874.5 120.7L876.4 130.4M882.3 123.6L893.5 122M882.3 123.6L876.4 130.4M882.3 123.6L888.9 129.5M893.5 122L896.2 132M902 123.9L896.2 132M902 123.9L906.9 129.6M917.8 120.1L924.5 125.6M917.8 120.1L906.9 129.6M853.5 135.9L858.8 142.8M863.5 133.6L858.8 142.8M863.5 133.6L869.7 144.2M876.4 130.4L888.9 129.5M876.4 130.4L869.7 144.2M876.4 130.4L882.6 139.8M888.9 129.5L896.2 132M896.2 132L906.9 129.6M896.2 132L891.6 141.5M896.2 132L906.2 140.1M906.9 129.6L906.2 140.1M858.8 142.8L869.7 144.2M869.7 144.2L882.6 139.8M869.7 144.2L869.4 153.2M882.6 139.8L891.6 141.5M882.6 139.8L879.3 149.4M882.6 139.8L888.9 150.9M891.6 141.5L906.2 140.1M891.6 141.5L897.1 150.8M906.2 140.1L897.1 150.8M869.4 153.2L879.3 149.4M869.4 153.2L883.4 161M879.3 149.4L888.9 150.9M879.3 149.4L883.4 161M931.9 74.8L939.4 75.1M931.9 74.8L933.2 78.8M939.4 75.1L933.2 78.8M939.4 75.1L940.4 78.3M929.6 80.1L925.9 87.3M929.6 80.1L933.5 88.4M933.2 78.8L940.4 78.3M933.2 78.8L933.5 88.4M940.4 78.3L947.4 80.7M940.4 78.3L943.7 84.4M947.4 80.7L954.2 81.4M947.4 80.7L950.5 84.9M954.2 81.4L950.5 84.9M954.2 81.4L958.1 90.4M925.9 87.3L933.5 88.4M925.9 87.3L928.2 91.8M933.5 88.4L939.1 88.4M933.5 88.4L933.2 92.8M939.1 88.4L941.4 93.2M943.7 84.4L949 94.5M950.5 84.9L958.1 90.4M928.2 91.8L933.2 92.8M928.2 91.8L923.6 96.7M933.2 92.8L931.4 97.8M933.2 92.8L939.6 100.4M941.4 93.2L939.6 100.4M941.4 93.2L945 97.5M949 94.5L958.1 90.4M949 94.5L945 97.5M949 94.5L952.5 99.4M958.1 90.4L952.5 99.4M958.1 90.4L960.8 98.8M923.6 96.7L931.4 97.8M923.6 96.7L925.9 104.2M931.4 97.8L933.8 105.3M939.6 100.4L945 97.5M939.6 100.4L940 103.5M945 97.5L947.1 104.4M952.5 99.4L960.8 98.8M952.5 99.4L947.1 104.4M960.8 98.8L958.2 104.7M960.8 98.8L962.5 106.5M925.9 104.2L933.8 105.3M925.9 104.2L932.9 108.3M933.8 105.3L940 103.5M933.8 105.3L932.9 108.3M933.8 105.3L939.7 110M940 103.5L947.1 104.4M940 103.5L939.7 110M947.1 104.4L943.3 109.5M947.1 104.4L952.3 110.1M958.2 104.7L962.5 106.5M958.2 104.7L952.3 110.1M958.2 104.7L959.6 108.6M962.5 106.5L959.6 108.6M932.9 108.3L939.7 110M939.7 110L943.3 109.5M952.3 110.1L959.6 108.6M796 33.5L805.5 30.6M796 33.5L799.7 40.7M805.5 30.6L812 30.5M805.5 30.6L799.7 40.7M805.5 30.6L810.2 39.2M812 30.5L810.2 39.2M819.4 32.1L816.2 41M799.7 40.7L810.2 39.2M799.7 40.7L798.6 45.8M799.7 40.7L809.8 46.6M810.2 39.2L809.8 46.6M816.2 41L809.8 46.6M816.2 41L821.2 47M798.6 45.8L802.2 49.2M802.2 49.2L809.8 46.6M802.2 49.2L809.7 51.9M809.8 46.6L809.7 51.9M821.2 47L815.2 53.8M809.7 51.9L815.2 53.8M566.8 116.5L575.2 114.2M566.8 116.5L572.3 125M566.8 116.5L564.3 128.5M575.2 114.2L572.3 125M575.2 114.2L576.4 124.5M586.2 113.5L589.9 116.9M586.2 113.5L576.4 124.5M572.3 125L576.4 124.5M572.3 125L564.3 128.5M572.3 125L576 131.6M576.4 124.5L576 131.6M576.4 124.5L585.9 131.3M590 121.4L598.5 122.2M590 121.4L590.5 129.8M598.5 122.2L590.5 129.8M564.3 128.5L569.1 136.8M576 131.6L585.9 131.3M576 131.6L578.6 140M585.9 131.3L590.5 129.8M585.9 131.3L578.6 140M585.9 131.3L588.9 137.4M590.5 129.8L600.1 134.1M590.5 129.8L588.9 137.4M600.1 134.1L594.9 139.3M569.1 136.8L578.6 140M569.1 136.8L574.9 149.6M578.6 140L588.9 137.4M588.9 137.4L594.9 139.3M588.9 137.4L581.4 145.8M588.9 137.4L592.5 147.4M574.9 149.6L581.4 145.8M515.5 255.3L516.4 261.8M506.1 264.2L516.4 261.8M506.1 264.2L510.2 268.6M516.4 261.8L519.9 263.4M516.4 261.8L510.2 268.6M516.4 261.8L516.8 269.2M519.9 263.4L528 262.2M519.9 263.4L516.8 269.2M519.9 263.4L528.5 268.5M528 262.2L528.5 268.5M510.2 268.6L516.8 269.2M510.2 268.6L504.5 276M516.8 269.2L528.5 268.5M516.8 269.2L516.2 275.3M528.5 268.5L529.1 277.5M504.5 276L516.2 275.3M516.2 275.3L522.7 278.1M522.7 278.1L529.1 277.5M522.7 278.1L517.8 282.5M878.6 134.2L877.7 139.9M868.1 140.4L877.7 139.9M868.1 140.4L867 145M868.1 140.4L872.6 146.5M877.7 139.9L883.5 145M887 142.2L883.5 145M887 142.2L889.8 148.3M867 145L872.6 146.5M867 145L870.2 151.2M872.6 146.5L879.3 152.9M883.5 145L879.3 152.9M889.8 148.3L886.9 154.7M870.2 151.2L879.3 152.9M879.3 152.9L886.9 154.7M833.7 378.4L837.6 383.5M829.2 383.2L837.6 383.5M829.2 383.2L831 389.1M837.6 383.5L843.9 385.3M837.6 383.5L831 389.1M837.6 383.5L841.6 388.6M831 389.1L841.6 388.6M831 389.1L837.7 394.5M661 230.6L661.5 232.3M654.3 232.8L661.5 232.3M661.5 232.3L657.2 244.3M661.5 232.3L669.1 242.9M670.6 233.9L669.1 242.9M670.6 233.9L673.5 241.4M652.2 241.3L654.7 248.4M657.2 244.3L654.7 248.4M657.2 244.3L660.5 248.6M669.1 242.9L673.5 241.4M669.1 242.9L660.5 248.6M654.7 248.4L660.5 248.6M730.2 43.8L724.1 47.8M724.1 47.8L731.4 47.1M724.1 47.8L732.4 57.7M731.4 47.1L741.6 46.9M731.4 47.1L732.4 57.7M741.6 46.9L743.8 54.1M732.4 57.7L734.5 64.2M737.1 58.2L743.8 54.1" fill="none" stroke="#f6c988" stroke-width="0.9" stroke-linecap="round"/>
<path d="M362.3 125C365.2 125.1 373.9 125.7 379.7 126.1C385.6 126.4 391.2 127 397.3 127.1C403.4 127.2 409.9 126.5 416.4 126.5C422.8 126.5 429.4 126.1 436.1 127C442.9 127.9 450.1 129.9 456.8 132C463.6 134 470.6 138 476.5 139.1C482.3 140.3 486.6 138.5 491.7 138.7C496.9 138.9 502.2 140 507.3 140.3C512.5 140.6 517.2 140.2 522.7 140.2C528.2 140.2 534.3 140.4 540.4 140.2C546.6 140 552.7 140 559.7 139C566.6 138 576 134.4 582.2 133.9C588.4 133.3 591.9 135 596.9 135.7C601.9 136.4 609.7 137.8 612.2 138.3M412.8 114.3C415.6 114.6 424.2 115.4 429.6 115.8C435.1 116.2 439.8 117.5 445.5 116.8C451.2 116.1 458 113.2 464 111.6C470 109.9 474.4 108.5 481.5 106.9C488.6 105.2 498.6 101.3 506.7 101.7C514.8 102 523.8 107.6 530 109.2C536.2 110.9 539.2 110.7 543.9 111.4C548.7 112.2 551.9 111.5 558.4 113.8C564.9 116.1 578.9 123.1 583 125M471.3 45.2C472.1 47.7 474.4 55.2 476.2 60C478 64.8 481.5 68.9 482.2 73.9C482.9 78.9 480.6 84.8 480.4 90.1C480.2 95.4 481.2 100.5 481 105.8C480.7 111.1 479.4 116.3 479 121.8C478.6 127.2 479.5 132.2 478.5 138.3C477.5 144.5 475.3 151.9 473.2 158.8C471.1 165.8 467.2 176.5 466 180M500.6 42.5C502.8 44.1 509.2 49 513.7 51.9C518.2 54.9 524.6 54.4 527.4 60.4C530.2 66.4 531.1 79.2 530.5 88.1C530 97 525.8 105 524.3 113.9C522.8 122.9 521.7 134 521.5 141.7C521.2 149.5 522.3 154.2 522.8 160.6C523.3 167 524.2 176.8 524.5 180M569.7 0C570.2 2.6 571.6 10.3 572.8 15.8C574 21.3 575.6 26.7 577 32.8C578.4 38.9 581.9 44.9 581.4 52.6C580.9 60.4 575.8 70.2 574.1 79.2C572.4 88.3 570.2 98.5 571.5 107.1C572.7 115.7 579.7 124.4 581.5 130.9C583.3 137.3 581.9 140.9 582.2 145.6C582.4 150.3 582.8 153.2 582.9 158.9C583.1 164.7 583 176.5 583 180M612.2 0C612.2 3.3 611.8 13.3 612 20C612.3 26.8 613.7 34 613.8 40.6C614 47.3 612.9 53.5 612.8 60C612.8 66.6 613.2 73.2 613.3 79.8C613.5 86.3 613.3 92.7 613.6 99.3C613.9 106 614.7 116.3 614.9 119.6M527.2 61.2C528.9 63.1 534.4 69 537.8 72.6C541.3 76.1 544.1 79.1 547.7 82.4C551.4 85.7 556 89.6 559.6 92.6C563.2 95.6 565.3 95 569.2 100.4C573.1 105.8 580.7 120.9 583 125M527.2 66.5C530.8 66.2 541.7 62.9 549.2 64.7C556.8 66.4 568.5 75 572.4 77.1M543.1 16C545.8 17.1 553.6 20.5 559 23.1C564.5 25.8 569.9 29.5 575.8 31.7C581.7 33.9 588.2 34.8 594.4 36.1C600.5 37.4 606.7 38.9 612.8 39.3C619 39.6 625.3 38.3 631.4 38.1C637.4 37.8 644 36.8 649.3 37.8C654.6 38.9 659 42.1 663.4 44.6C667.7 47.2 670 51.8 675.5 53C681.1 54.2 689.7 52 696.6 51.6C703.5 51.2 713.6 50.7 717 50.5M612.2 16C616.6 16.3 631.2 18.3 638.2 18.2C645.1 18.1 648.9 16.6 653.9 15.3C658.8 14.1 665.7 11.4 668.1 10.6M649.5 0C649.3 3.1 648.6 12.7 648.6 18.7C648.7 24.8 649.3 31.1 649.9 36.4C650.5 41.7 651.8 48.2 652.1 50.5M668.1 0C668.6 4.3 670 17 671.3 25.9C672.7 34.8 674.3 46.6 676.2 53.3C678.2 60 680.8 61.7 682.9 66.1C685.1 70.6 688.4 74.9 689.2 79.9C690 84.9 688.3 90.7 687.9 96C687.5 101.3 684.7 105.4 686.6 111.6C688.5 117.8 694.1 130.8 699.1 133.2C704.2 135.5 714 126.7 717 125.4M583 125C585.2 121.8 590.9 111.6 596.3 105.9C601.7 100.2 608.3 93.6 615.4 90.9C622.5 88.2 632.2 89.1 638.8 89.8C645.3 90.5 649.4 93.1 654.7 95C660.1 96.9 668.1 100 670.7 101M638.8 90.4C641.4 88.6 649.8 83.6 654.1 79.6C658.4 75.6 661 70.8 664.7 66.4C668.3 62 674.2 55.4 676.1 53.2M583 134.3C585.4 135.3 592.8 138.3 597.6 140.8C602.5 143.2 609.8 147.5 612.2 148.9M668.1 148.9C671.7 147 683.7 138.5 689.6 137.5C695.5 136.5 699 141.5 703.6 143C708.2 144.6 714.8 146.2 717 146.8M426.1 98.4C427.5 100.9 432.4 108.9 434.1 113.5C435.9 118.2 436.3 124.2 436.8 126.3M362.3 93.1 L373 95.7M540.5 0C540.9 2.6 543.4 10.7 543.1 15.7C542.8 20.8 540.3 25.2 538.6 30.4C536.9 35.6 535 41.8 533.1 47C531.2 52.1 528.2 58.8 527.2 61.2M500.6 42.5 L474 34.6M583 159.5C580 161.4 569.7 167.3 564.8 170.7C559.9 174.1 555.6 178.5 553.8 180M583 138.3C585.1 141.9 590.9 154.6 595.7 160.4C600.6 166.2 609.5 170.8 612.2 172.8M673.4 159.5C676.5 161.4 684.7 171 692 171C699.3 171 712.8 161.4 717 159.5M734.4 53.6C738.3 52.6 749.6 49.7 757.9 47.6C766.3 45.5 776.1 41.8 784.5 41C792.9 40.2 804.2 42.6 808.1 42.9M808.1 42.9C809.8 44.4 814.4 49 818 52C821.7 55 825.5 59 830 61C834.5 63 840.1 63 845 63.9C849.9 64.8 854.8 65 859.6 66.3C864.4 67.7 869 70.4 873.7 71.8C878.5 73.1 881.9 72.8 888 74.6C894 76.4 903.3 80.5 909.9 82.7C916.6 84.9 922 86.5 927.8 87.8C933.6 89.2 941.9 90.6 944.7 91.1M808.1 42.9C809.8 46.6 814.6 57.4 818.2 65.1C821.8 72.8 826.3 83.6 829.9 89.1C833.4 94.7 836.3 95.3 839.7 98.3C843.1 101.3 845.7 102.2 850.3 107.2C854.9 112.2 862.7 121.8 867.3 128.4C871.9 135 876 143.8 877.8 146.8M877.8 146.8C880.6 144.7 889.1 138.8 894.5 134.1C899.9 129.4 904.9 123.4 910.1 118.6C915.2 113.8 919.5 110 925.3 105.4C931.1 100.8 941.5 93.5 944.7 91.1M734.4 53.6C733.8 58 732.6 71.3 730.6 80.2C728.7 89.1 725.2 99.2 722.9 106.8C720.6 114.3 718 122.3 717 125.4M734.4 53.6C736.2 55.4 742 60.8 745.3 64.4C748.7 68.1 749.2 72.9 754.3 75.5C759.3 78.1 768.7 78.5 775.8 79.8C783 81.1 793.8 82.5 797.4 83.1M808.1 42.9C806.4 45.9 800 54.2 797.8 60.8C795.7 67.4 794.4 75.6 795.3 82.6C796.1 89.6 798.6 98.5 803 102.7C807.4 106.8 818.1 103.6 821.6 107.5C825.2 111.3 823.8 122.9 824.2 125.9M717 16.1C721.4 16.8 736.7 20.6 743.5 20.5C750.2 20.4 752.7 17.1 757.7 15.4C762.7 13.8 768.6 13.2 773.5 10.6C778.3 8 784.5 1.8 786.7 0M717 34.8 L734.4 53.6M842.9 0C842.5 4.6 840.4 18.7 840.3 27.5C840.2 36.4 842.2 44.4 842.3 53.1C842.3 61.8 839.7 72.8 840.5 79.5C841.4 86.3 844.8 88.9 847.4 93.5C850 98.1 854.8 104.9 856.3 107.2M875.1 0C875.4 4.4 875.8 19.8 877.1 26.5C878.3 33.3 880.7 35.9 882.6 40.3C884.6 44.8 887.7 47.3 888.6 53.1C889.6 58.8 888.5 71.4 888.5 75M899.2 0C900.1 2.2 903.1 8.8 904.8 13.4C906.5 17.9 906.7 21.9 909.3 27.6C911.8 33.3 917.5 40.5 920.2 47.6C922.8 54.7 923.8 63.1 925.3 69.9C926.7 76.7 928.1 85.3 928.7 88.4M808.1 42.9C810.9 41.6 819.5 38.1 824.8 35.3C830.2 32.6 834.5 27.8 840.1 26.4C845.6 25 851.8 27 858.1 27.1C864.4 27.1 871.9 26.6 877.9 26.5C883.9 26.5 888.6 26.6 894.1 26.7C899.6 26.8 905 24.4 910.7 27.2C916.4 30 921.2 39.6 928.2 43.6C935.2 47.5 948.7 49.7 952.8 50.9M759.9 115.2C763.8 117 776.9 120.3 783.2 126C789.4 131.7 794.1 143 797.2 149.6C800.3 156.2 800.1 160.5 801.9 165.6C803.8 170.6 807.1 177.6 808.1 180.1M759.9 115.2C757 117.5 750.1 125.6 742.9 128.7C735.8 131.8 721.3 133.1 717 134M759.9 115.2C761.3 112.9 766.1 105.6 768.7 101.2C771.3 96.7 771.1 91.6 775.4 88.6C779.7 85.6 791.5 84 794.7 83.1M717 146.8C719.2 148 725.8 151.8 730.4 154C735 156.3 739.1 159.6 744.4 160.2C749.7 160.8 756.2 158.4 762.2 157.7C768.2 157 776.9 152.4 780.5 156.1C784.1 159.8 783.4 176 784 180M877.8 146.8C878.7 149.2 881.8 155.6 883.6 161.1C885.4 166.7 887.7 176.9 888.5 180M877.8 146.8C874 147.9 863.4 151.5 855.4 153.3C847.5 155.2 836 155.4 830 158C823.9 160.6 822.9 165.3 819.3 169C815.6 172.7 810 178.2 808.1 180.1M877.8 146.8C881.3 147.2 892.5 148 898.7 149.3C904.9 150.6 908.5 152.6 914.8 154.6C921.1 156.6 930 159.2 936.4 161.2C942.8 163.2 948.2 165 953.1 166.7C958.1 168.5 964 170.7 966.2 171.5M915.3 155.4 L912.6 180.1M944.7 91.1C942.6 94.6 935.7 105.9 931.7 112.1C927.7 118.4 922.5 125.9 920.6 128.6M904.6 83.1C904.6 87.1 902 102.1 904.7 107.1C907.3 112 918 111.6 920.6 112.5M959.5 80.4C960.3 82.6 963.2 89.3 964.7 93.8C966.2 98.3 966.4 101.6 968.4 107.4C970.5 113.2 975.5 125.1 976.9 128.6M936.7 160.8 L944.7 180M934 91.1C934.4 89.7 934.3 84.6 936.2 82.6C938.1 80.5 942.5 79 945.4 79C948.3 79 951.9 80.4 953.7 82.6C955.5 84.7 956.5 89.1 956.4 91.9C956.4 94.7 955.1 97.7 953.2 99.4C951.4 101.1 948.4 102 945.4 102C942.5 102.1 937.6 101.7 935.7 99.9C933.8 98 934.3 92.6 934 91.1M923.3 91.1C923.8 88.9 922.6 81 926.2 78C929.8 75.1 939.3 72.8 945 73.2C950.8 73.6 958.2 79.2 960.8 80.4M923.3 91.1C924.2 93.9 925 104.6 928.6 107.8C932.2 111 940.2 111 945.1 110.5C950 110 954.7 108.1 958 104.9C961.3 101.7 963.7 93.4 964.8 91.1M904.6 83.1 L923.3 91.1M867 128.6C870.6 128.1 881.5 127.4 888.6 125.6C895.8 123.8 906.4 119.2 909.9 117.9M743.8 21.4C744.8 23.7 747.7 30.6 750 35.1C752.2 39.5 756 46 757.2 48.2M362.3 222.5C364.4 221.8 370.5 219.9 374.9 218C379.2 216 383.4 213.3 388.3 211.1C393.1 208.8 398.8 207.3 404.2 204.7C409.5 202.1 414.4 194.7 420.5 195.3C426.7 195.9 436.7 203.4 441.2 208.4C445.8 213.4 444.2 221.2 447.7 225.4C451.3 229.6 457.7 231 462.4 233.6C467.1 236.2 471.1 238.4 475.9 241.3C480.6 244.2 485.9 247.8 491 251C496.1 254.2 502.2 257.7 506.5 260.5C510.7 263.3 514.9 266.5 516.5 267.7M362.3 262.4C366.6 261.6 380.9 259.8 388.1 257.8C395.3 255.7 400.3 252.8 405.6 249.9C410.9 247.1 415.5 243.6 420.1 240.6C424.7 237.7 428.9 234.9 433.4 232.3C438 229.8 445.1 226.4 447.4 225.2M362.3 307.6C364.6 309.5 371.8 315.2 376.2 318.8C380.7 322.5 384.3 328.5 389.1 329.5C394 330.4 399.9 326.1 405.1 324.5C410.3 323 413 320.4 420.1 320.2C427.2 319.9 441 321.8 447.9 323C454.7 324.3 456.7 326.4 461.3 327.9C465.8 329.4 470.2 330.4 474.9 332C479.6 333.6 482.6 336.1 489.5 337.3C496.4 338.5 509.4 337.9 516.3 339.2C523.1 340.5 526.1 343 530.7 344.9C535.2 346.7 538.1 347.9 543.7 350.4C549.4 352.9 560.9 358.4 564.4 360M373 294.3 L394.2 283.7M431.4 295.7C434 296.7 439.5 301.8 446.6 302.1C453.6 302.5 466.7 299.4 473.9 297.5C481.1 295.6 484.3 293.1 489.7 290.7C495 288.3 501.5 287 506 283.2C510.4 279.4 514.8 270.3 516.5 267.7M447.4 302.3C451.1 303.1 464.9 307.8 469.3 306.9C473.8 306 473.2 298.6 474 297M396.9 360C397.4 356.5 401.4 344.1 400.1 338.9C398.8 333.7 390.8 330.6 388.9 328.9M434.1 326.2C434.4 330.1 434.1 344 435.9 349.6C437.6 355.3 443.3 358.3 444.7 360.1M489.9 336.9C490.9 333.9 493.2 325.8 495.7 319.1C498.2 312.5 502.4 304.1 505 297C507.6 289.8 509.3 281.1 511.2 276.3C513.1 271.4 515.6 269.2 516.5 267.7M516.5 267.7C516.9 270.8 518.7 278.7 518.6 286.3C518.6 294 518.4 306.3 516.3 313.5C514.1 320.8 509 324.6 505.5 329.7C501.9 334.8 496.6 339.3 494.9 344.3C493.2 349.4 495.2 357.5 495.3 360.1M516.5 267.7C520.1 267.7 532.1 268.4 538.2 267.7C544.2 267.1 547.9 265.2 553 264C558.2 262.8 564.4 261.4 568.9 260.3C573.5 259.1 578.4 257.6 580.3 257.1M537.8 259.8C538.3 264.3 539.9 278 540.8 286.9C541.7 295.7 543.4 303.9 543.3 312.7C543.3 321.4 539.2 331.4 540.3 339.3C541.3 347.2 548.2 356.6 549.8 360.1M516.5 312.9C516 316.8 514.3 328.3 513.2 336.1C512.1 344 510.4 356.1 509.9 360.1M524.5 180C525.9 184.3 532.2 196.9 533.2 205.7C534.2 214.5 531.5 224.2 530.6 232.7C529.7 241.3 530.2 251.3 527.9 257.1C525.5 262.9 518.4 266 516.5 267.7M553.8 180C552.8 184.5 547.9 199.3 548.2 207.3C548.6 215.2 556.8 220.3 555.9 227.8C555.1 235.3 546.2 245.6 543.2 252.2C540.2 258.9 538.7 265.2 537.8 267.7M463.4 209.2C466.1 208 474.5 204.2 479.8 201.5C485 198.8 489.8 194.5 495 193C500.1 191.5 505.2 192.9 510.6 192.6C516 192.3 520.3 191.4 527.5 191.1C534.6 190.7 549.4 190.7 553.8 190.6M543.1 297C546.1 296.7 554.8 296 561.1 295.5C567.4 295.1 575.1 295.3 580.8 294.5C586.6 293.6 590.3 291.7 595.6 290.3C601 288.8 606.3 287.5 612.9 285.9C619.6 284.3 629.5 283.6 635.6 280.7C641.8 277.8 646.5 272.8 649.8 268.4C653.1 263.9 653.3 258.4 655.5 253.8C657.6 249.3 661.5 243.3 662.8 241.2M580.3 257.1C583.8 254.4 595.8 240.5 601.2 240.8C606.5 241.2 610.5 251.7 612.3 259.2C614.1 266.6 612.2 276.8 611.9 285.8C611.6 294.8 610.5 304.3 610.4 313.4C610.4 322.4 612.1 332.6 611.5 340.4C610.9 348.1 607.7 356.8 606.9 360.1M601.6 241.2C601 237.6 596.3 225.3 598.2 219.7C600.2 214 607.2 210.2 613.1 207.1C619.1 204 626.5 201.7 633.9 201.2C641.3 200.6 653.5 203.5 657.4 203.9M612.2 206.6C612.6 204 612.1 195.3 614.4 190.9C616.6 186.5 623.7 181.8 625.5 180M662.8 241.2C662.2 238 660.3 228.4 659.4 222C658.5 215.7 657.1 210.1 657.2 203.1C657.4 196.1 659.6 183.8 660.1 180M662.8 241.2C664.9 243.9 671.8 251 675.9 257.6C679.9 264.3 682.5 274 687 281C691.5 288 700.6 294 702.9 299.6C705.2 305.1 701.2 309.5 700.7 314.5C700.2 319.4 697.1 324.6 699.8 329.3C702.5 334.1 714.1 340.6 717 342.8M662.8 241.2C658.9 239.8 647.1 232.5 639.6 233C632.1 233.6 622.2 239.8 617.7 244.3C613.1 248.7 613.2 257.2 612.2 259.8M673.4 239.8C675.8 239.4 682.9 237.8 687.8 237.2C692.7 236.6 698 236.8 702.9 236.2C707.7 235.6 714.6 233.9 717 233.4M676.1 257.1C679.5 257.5 690.2 258.9 697 259.6C703.8 260.3 713.7 261.1 717 261.4M686.7 281C685.5 283.3 682 290.2 679.3 294.7C676.7 299.1 676 303.1 671 307.5C666 312 657.1 318.3 649.1 321.1C641.1 324 627.3 324.3 622.9 324.9M622.9 324.9C622.3 321.1 617.7 309.5 619.5 302.2C621.3 294.8 631.2 284.6 633.5 281M575 332.9C578.7 333.6 590.6 336.2 596.8 337.3C603 338.3 608.2 337 612.5 339.1C616.8 341.2 619.2 346.2 622.7 349.7C626.2 353.2 631.7 358.4 633.5 360.1M564.4 360C568 358.3 580.1 352.4 585.9 350C591.7 347.6 594.9 347.4 599.3 345.6C603.7 343.9 610.1 340.5 612.2 339.5M717 286.4C715.4 288.2 709.8 295 707.4 297.3C705 299.5 703.4 299.2 702.6 299.6M717 196C713.8 196.4 703.3 201.1 697.8 198.4C692.3 195.8 686.3 183.1 684 180M505.9 259.8C509.4 259.9 523.7 256.6 527.1 260.6C530.6 264.6 530 279.8 526.3 283.8C522.7 287.7 508.7 288.2 505.3 284.2C501.9 280.2 505.8 263.8 505.9 259.8M657.4 233.2C660.5 233.4 672.8 230.5 675.5 234.5C678.3 238.6 676.8 253.6 674 257.2C671.2 260.8 661.6 260.2 658.8 256.2C656.1 252.2 657.7 237 657.4 233.2M717 214.8C721.5 213.5 734.8 209.3 743.8 207C752.8 204.8 765 204.1 771.2 201.5C777.4 198.9 779 195.1 781.1 191.5C783.3 187.9 783.5 181.9 784 180M781.3 190.7C782.6 193 786.2 199.9 788.8 204.4C791.5 209 791.4 215.2 797.2 218C803 220.8 816.4 221.5 823.5 221.1C830.6 220.6 834.6 216.9 840 215.4C845.4 213.9 850.7 213.4 855.9 212C861.2 210.5 866.1 208.3 871.5 206.6C876.9 205 883.3 203.6 888.3 201.8C893.3 200 897.2 197.4 901.6 195.7C906 193.9 909.9 192.9 914.8 191.2C919.6 189.4 925.8 187.3 930.8 185.4C935.8 183.6 942.4 180.9 944.7 180M824.2 220.2C825 216.3 824.6 203.3 829 196.6C833.5 189.9 847.3 182.8 851 180M824.2 220.2C825.9 223.7 831.2 235.9 834.7 241.1C838.2 246.3 841.2 248.2 844.9 251.5C848.6 254.8 851.4 258.7 856.9 260.6C862.3 262.6 872.1 261.7 877.7 263.2C883.3 264.6 886.2 267.4 890.7 269.3C895.1 271.1 899.2 273.6 904.3 274C909.4 274.4 916.7 273.9 921.2 271.7C925.7 269.4 929.7 262.3 931.3 260.4M856.3 212.2C858.1 214.8 862.5 224.6 867 227.9C871.5 231.1 877.7 230.2 883.2 231.6C888.7 232.9 894.3 236.6 899.8 236C905.2 235.4 910.2 227.8 915.9 227.8C921.6 227.8 929 234.4 933.8 235.8C938.6 237.2 942.9 236.2 944.7 236.3M888.5 180C888.5 183.5 887.6 194.3 888.3 200.9C889.1 207.4 891.2 213.4 892.9 219.2C894.7 225.1 896 229 898.8 235.8C901.6 242.7 908.6 254 909.6 260.3C910.5 266.7 905.4 271.5 904.6 273.8M915.3 190.7C916.1 193.4 917.3 202.6 920.5 207C923.7 211.5 931.9 212.3 934.3 217.3C936.7 222.2 935.3 229.7 934.8 236.9C934.3 244.1 931.9 256.5 931.3 260.4M856.3 260.4C858 257.4 862.7 246.7 866.2 242.2C869.8 237.7 875.8 235 877.8 233.6M856.3 260.4C854.7 262.7 850.9 271.5 846.3 274.3C841.8 277.1 833.4 274.2 828.9 277.1C824.3 279.9 821.6 286.4 819.1 291.7C816.5 296.9 814.4 305.8 813.5 308.6M797.4 217.5C796.3 221.2 791.5 232.7 791.1 239.8C790.7 246.8 794.1 253 795 259.9C795.9 266.8 798.1 275.2 796.7 281.2C795.2 287.1 790.5 291.6 786.2 295.7C781.8 299.8 773.2 304.2 770.6 305.9M717 233.4C721.4 232.4 734.5 228.8 743.5 227.6C752.6 226.4 762.3 227.8 771.3 226.1C780.3 224.4 793 218.9 797.4 217.5M717 261.4C721.4 260.9 736 258.9 743.2 258.4C750.4 257.9 755.4 259.8 760.1 258.2C764.7 256.6 767.3 252.1 770.9 249C774.5 245.9 777.4 244.8 781.8 239.6C786.2 234.3 794.8 221.2 797.4 217.5M759.9 257.7C760.2 261.8 760.2 274.1 762 282.2C763.8 290.2 769.2 302 770.6 305.9M770.6 305.9C767.5 308.2 758.2 315.6 751.9 319.8C745.6 323.9 738.8 326.9 733 330.7C727.2 334.6 719.7 340.8 717 342.8M770.6 305.9C771.5 309 772.6 319.9 776 324.3C779.5 328.6 786.6 332.6 791.5 332.1C796.4 331.6 802.7 325.2 805.4 321.2C808.2 317.2 810.7 310.3 808 308C805.4 305.6 795.6 307.6 789.3 307.3C783.1 306.9 773.7 306.2 770.6 305.9M733.1 330C734.9 332.8 739.6 341.8 743.9 346.8C748.1 351.8 756.1 357.8 758.5 360.1M792 332.7C790.5 336 784.9 347.5 783.1 352.1C781.3 356.6 781.6 358.7 781.3 360.1M805.4 322C808.5 323.4 818.5 328.5 824.1 330.2C829.7 331.8 834.3 331.6 839.2 332C844.1 332.4 850.6 330.2 853.4 332.6C856.3 334.9 855.8 343.9 856.3 346.1M904.6 273.8C904.7 276.8 907.1 285.9 905.4 291.8C903.6 297.6 897.5 303.3 894.1 308.9C890.7 314.4 887.2 319.9 885 324.9C882.7 329.9 885.5 335.3 880.8 338.9C876 342.4 860.4 344.9 856.3 346.1M821.5 330 L821.5 340.8M444.7 360.1C446.9 363.8 453.7 375.2 457.7 382.3C461.7 389.4 465.4 395.9 468.7 402.7C472 409.5 476.4 416 477.4 423.1C478.3 430.3 475.4 440 474.4 445.5C473.4 450.9 471.8 454.2 471.3 455.9M495.3 349.5C491.7 351.4 479.5 358 473.7 360.8C467.9 363.7 464.8 364.6 460.5 366.8C456.1 369 451.9 371.5 447.4 374C443 376.4 438 378.7 433.6 381.3C429.1 383.9 424.9 386.5 420.7 389.5C416.4 392.6 412.4 396.2 408.1 399.7C403.8 403.2 398.9 406.8 394.8 410.5C390.7 414.3 387.2 418.1 383.6 422.2C380 426.4 376.5 429.8 373 435.5C369.5 441.2 365.3 450.4 362.6 456.4C359.9 462.5 357.9 469.3 357 471.8M373 434.6C375.1 438.1 381.8 450.7 385.9 455.6C390.1 460.5 393.8 461.2 397.8 464C401.9 466.8 405.8 469.2 410.4 472.4C415 475.5 418.7 481 425.3 482.9C431.9 484.8 445.9 483.7 450.1 483.8M373 434.6C374.8 435.5 382.6 441 384.3 440C385.9 439.1 384.7 429.8 382.8 428.9C380.9 428 374.6 433.7 373 434.6M495.3 360.1C494.2 364.4 489.4 377.3 489.1 386.2C488.7 395.1 492.3 405.4 493.4 413.5C494.4 421.7 493.5 429.9 495.5 435.1C497.6 440.4 504.2 443.6 505.9 445.3M509.9 360.1C510.7 364.6 512.6 379.8 514.6 387C516.6 394.1 521.2 397.6 522.1 402.9C522.9 408.3 521.3 414.4 519.5 418.8C517.7 423.2 512.6 427.6 511.2 429.3M434.1 413.4C436.4 414.6 442.4 419.7 447.7 420.8C453.1 421.9 460.1 420.4 466.3 419.9C472.5 419.4 478.6 419.6 485.1 418C491.6 416.3 499.6 411.5 505.3 409.9C511 408.2 516.9 408.3 519.2 408M447.4 421.3C445.7 424.6 441.7 436.7 437.3 440.7C432.8 444.7 423.6 444.5 420.8 445.3M505.9 445.3C503.3 447 493.7 452 490.2 455.7C486.8 459.3 484.3 463.5 485.2 467C486.1 470.6 492.8 473.4 495.4 476.7C497.9 480.1 499.7 485.3 500.6 487M521.8 437.3C522.7 440.4 523.3 451.3 526.8 455.8C530.3 460.2 538.3 460 542.8 463.7C547.3 467.4 551.7 474.1 554 477.9C556.3 481.8 556 485.5 556.4 487M543.1 463.9C545.6 461.7 551.8 455.2 558.3 450.7C564.8 446.2 577.2 439.7 582.2 436.6C587.2 433.5 587.3 432.7 588.3 432M519.2 418.7C523.3 418.2 535.6 416.6 543.7 416.1C551.8 415.7 560.1 417.7 567.8 415.9C575.5 414.1 582.7 407.7 590.1 405.2C597.5 402.7 606.9 402.4 612.4 400.8C617.9 399.3 621.1 396.9 622.9 396.1M549.8 360.1C550.6 364.5 553.1 378.8 554.6 386.7C556.1 394.6 559.5 402 558.9 407.3C558.3 412.6 552.4 416.8 551.1 418.7M606.9 360.1C606.5 364.4 604.2 377.5 604.5 386.2C604.9 395 607.8 403.5 609 412.5C610.1 421.5 610.5 431.1 611.4 440.3C612.2 449.4 614.1 459.6 614.2 467.4C614.4 475.2 612.6 483.7 612.2 487M633.5 360.1C636 361.5 641.7 367.2 648.7 368.8C655.7 370.5 668.1 368.4 675.4 369.9C682.7 371.5 685.5 377.5 692.4 378.3C699.3 379.2 712.9 375.6 717 375.1M622.9 396.1C626.5 396.2 638.1 396.1 644.6 396.8C651.1 397.6 656.6 400.8 662 400.6C667.3 400.3 674.1 400.3 676.4 395.4C678.8 390.4 676.1 374.9 676.1 370.8M676.1 370.8 L685.4 360.2M665.4 398.7C664.6 402.8 661.6 416.3 660.5 423.2C659.4 430.2 659.5 434.9 659 440.3C658.5 445.8 657.7 453.3 657.4 455.9M676.1 394.7C678.3 398.9 685.4 412.7 689.3 419.4C693.2 426.2 694.9 431.5 699.5 435.5C704.2 439.4 714.1 441.9 717 443.1M673.4 445.3C676.6 444.2 688 440.8 692.4 439.1C696.8 437.3 698.7 435.4 700 434.6M681.4 445.3C680.8 448.8 678.7 459.8 677.8 466.8C677 473.8 676.4 483.6 676.1 487M717 408.4C715.1 409.1 708.7 408.2 705.9 412.6C703 417 701 431 700 434.6M600.3 458.6C600.2 459.9 597.6 465.5 599.9 466.9C602.3 468.4 611.8 469.2 614.3 467.2C616.8 465.2 617.2 456.5 614.9 455.1C612.5 453.7 602.7 458 600.3 458.6M678.7 485.1 L697.3 482.5M713.3 455.9 L708 463.9M836.2 387.4C834.2 389.2 828.2 394.6 823.9 398.2C819.7 401.9 813.9 404.6 810.7 409.1C807.5 413.7 807.9 420.1 804.8 425.4C801.6 430.8 794.8 436 791.8 441.2C788.8 446.5 790 452.4 786.9 456.9C783.8 461.4 776.2 463.3 773.1 468.3C769.9 473.3 768.8 483.9 767.9 487.1M836.2 387.4C837.5 385.7 841.3 381.6 843.7 377.2C846.2 372.7 849.8 363.4 851 360.6M836.2 387.4C833.3 386 825.1 380.6 818.9 379C812.8 377.3 805 378.2 799.3 377.5C793.5 376.8 788.3 376.5 784.3 374.6C780.4 372.7 776.2 368.6 775.6 366.1C775.1 363.7 780.4 361.1 781.3 360.1M836.2 387.4C837 389.7 840.9 397 841.1 401.4C841.4 405.8 837 411.2 837.8 413.8C838.5 416.4 844.3 416.3 845.6 416.9M836.2 387.4 L851 384.7M775.9 365.9C772.8 366.5 762.5 366.6 757.1 369.3C751.7 372.1 747.5 377.9 743.6 382.4C739.6 386.8 737.7 391.8 733.3 396.1C728.8 400.5 719.7 406.4 717 408.4M743.8 382C743 384.6 738.2 393.3 739 397.7C739.7 402.1 743.9 405.6 748.3 408.4C752.6 411.2 759.5 411.5 765.1 414.3C770.7 417.2 778.9 420.2 781.9 425.6C784.9 431 784.6 439.9 783.2 446.9C781.7 454 774.9 464.3 773.3 467.8M717 375.1C718.9 374.5 723.8 370.8 728.3 372C732.7 373.1 741.2 380.3 743.8 382M757.2 368.6 L758.5 360.1M781.3 424.9 L805.4 424.9M781.3 424.9C777.8 425.7 766.6 429.3 760 429.8C753.4 430.4 747.1 427 741.7 428.1C736.4 429.2 732.2 433.9 728 436.4C723.9 438.9 718.8 442 717 443.1M717 465.1C719.6 466.3 728.3 468.7 732.8 472.4C737.3 476 742 484.6 743.8 487.1M751.8 467.8C753.6 466.5 759.1 460.3 762.6 460.3C766.2 460.3 771.5 466.5 773.3 467.8M784 446.3C788.4 446.4 804.4 447.2 810.2 446.8C816 446.3 817.4 444.2 818.8 443.6M733.1 395.4 L717 387.4M100.1 66.8C102.1 63.9 108.3 53.8 112.1 49.6C115.8 45.4 120.7 43 122.4 41.7M133.5 11.1 L136.3 0M154.4 11.1C155.1 9.8 154.8 5 158.8 3.1C162.7 1.2 174.8 0.5 178 0M158.6 44.5 L160 66.8M189.2 66.8C191 63 197.4 48.2 200.2 44C203 39.8 204.9 42.1 205.9 41.7M194.7 52.9C197.4 53.4 207.3 53.8 211 56.1C214.7 58.4 216 65 217 66.8M261.5 66.8C263 64 268.5 53.9 270.4 50C272.2 46.1 272.2 44.3 272.6 43.1M294.9 9.7C296.6 8.7 298.7 4.6 305.3 3.3C311.8 2.1 326.3 2.5 334.3 2.3C342.3 2.1 347 2.5 353.4 2.1C359.8 1.7 369.5 0.4 372.8 0M199.1 360.5C195.3 362 184.2 365.4 176.4 369.3C168.6 373.3 158.8 380.3 152.2 384.1C145.7 387.9 142 389.2 137.1 392.2C132.1 395.1 125.8 399.3 122.4 401.9C119 404.4 117.3 403.6 116.9 407.5C116.5 411.3 120.4 420.2 119.9 425C119.3 429.7 117.4 432.9 113.6 435.8C109.7 438.7 99.5 441.4 96.6 442.5M199.1 360.5C199.3 363.9 202.1 375.8 200 380.8C197.9 385.7 190.7 387.2 186.7 390C182.7 392.9 180.9 394.6 176.2 397.9C171.5 401.3 163.3 406.1 158.3 410C153.3 413.9 152.8 418.6 146.4 421.1C140.1 423.6 124.5 424.3 120.1 424.9M199.1 360.5C202.4 362.1 211.8 366.8 218.8 370.2C225.7 373.6 233.3 377.8 240.8 381C248.3 384.2 257.3 387.2 263.7 389.4C270 391.5 273.7 392.4 278.7 394C283.7 395.7 288.7 398.4 293.6 399C298.5 399.7 303.4 398.6 308 397.9C312.7 397.2 317.9 395.2 321.7 394.8C325.5 394.4 329.4 395.5 330.9 395.6M199.1 360.5C202.9 360.4 214.8 360.5 222 359.9C229.2 359.3 235.4 356.1 242.3 356.8C249.2 357.5 256.2 364.9 263.6 364.1C271.1 363.3 283.1 353.8 287 351.7M243 357.6C242.5 361.6 240.7 375.3 240 381.8C239.4 388.3 239.8 391.1 239.4 396.3C238.9 401.5 237.4 405.7 237.4 413C237.4 420.4 236.6 432 239.4 440.4C242.3 448.7 247.3 458.2 254.3 463.1C261.3 468 274.4 468.3 281.4 469.7C288.3 471.1 291.2 470.8 296.1 471.6C300.9 472.3 304 471.5 310.3 474.1C316.6 476.7 329.9 484.8 333.8 487M322.1 381 L322.1 395.6M152.3 383.9C150.5 383.6 143.8 381.9 141.4 381.9C139 381.9 138.3 383.6 137.6 383.9M155.2 375.1 L152.3 383.9M29.3 348.8C28.7 352.1 25.9 362.2 25.9 368.5C25.8 374.8 29.1 379.5 28.8 386.6C28.6 393.7 26 404.6 24.2 411C22.3 417.4 18.7 422.6 17.6 424.9M52.7 410.3C56.7 410.1 69.8 410.9 76.7 409.5C83.7 408.1 87.5 402.2 94.2 401.9C101 401.5 113.3 406.4 117.1 407.3M93.7 401.5C94.7 397.7 98.8 384.3 99.8 378.9C100.8 373.6 99.6 370.9 99.6 369.3M114.2 436.6C117.5 439 127.5 445.6 133.9 450.6C140.3 455.6 146.7 462.3 152.7 466.7C158.8 471.1 166.3 473.9 170.2 477.3C174 480.6 174.8 485.4 175.7 487M52.7 410.3C53.2 414.7 57.3 431.7 55.8 437.1C54.3 442.5 45.9 441.6 43.9 442.5M400 419.1C396.7 421.5 385.2 427.2 380 433.4C374.7 439.6 372.3 449.2 368.5 456.5C364.7 463.7 362 471.9 357.2 477C352.4 482.1 342.6 485.3 339.7 487M380.7 433.7C379.6 435.1 373.9 440.9 374.3 441.8C374.8 442.8 382.1 439.9 383.6 439.6M351.4 351.7C352.9 354.5 360 361.6 360.5 368.4C361 375.2 355.3 388.7 354.3 392.7M392.4 351.7 L400 342.9M377.7 448.3C379.8 450.7 386.1 459 389.8 462.4C393.6 465.9 398.3 467.8 400 468.8M0 445.4C1.3 444.6 5.1 443.6 7.9 440.3C10.8 437 14 430.2 17.1 425.7C20.1 421.2 24.8 415.3 26.4 413.2M0 445.4C2.1 446.5 11.4 449 12.4 452C13.3 454.9 6.9 461.2 5.9 463" fill="none" stroke="#fdeed6" stroke-width="2.6" stroke-linejoin="round" stroke-linecap="round"/>
<path d="M362.3 125C365.2 125.1 373.9 125.7 379.7 126.1C385.6 126.4 391.2 127 397.3 127.1C403.4 127.2 409.9 126.5 416.4 126.5C422.8 126.5 429.4 126.1 436.1 127C442.9 127.9 450.1 129.9 456.8 132C463.6 134 470.6 138 476.5 139.1C482.3 140.3 486.6 138.5 491.7 138.7C496.9 138.9 502.2 140 507.3 140.3C512.5 140.6 517.2 140.2 522.7 140.2C528.2 140.2 534.3 140.4 540.4 140.2C546.6 140 552.7 140 559.7 139C566.6 138 576 134.4 582.2 133.9C588.4 133.3 591.9 135 596.9 135.7C601.9 136.4 609.7 137.8 612.2 138.3M412.8 114.3C415.6 114.6 424.2 115.4 429.6 115.8C435.1 116.2 439.8 117.5 445.5 116.8C451.2 116.1 458 113.2 464 111.6C470 109.9 474.4 108.5 481.5 106.9C488.6 105.2 498.6 101.3 506.7 101.7C514.8 102 523.8 107.6 530 109.2C536.2 110.9 539.2 110.7 543.9 111.4C548.7 112.2 551.9 111.5 558.4 113.8C564.9 116.1 578.9 123.1 583 125M471.3 45.2C472.1 47.7 474.4 55.2 476.2 60C478 64.8 481.5 68.9 482.2 73.9C482.9 78.9 480.6 84.8 480.4 90.1C480.2 95.4 481.2 100.5 481 105.8C480.7 111.1 479.4 116.3 479 121.8C478.6 127.2 479.5 132.2 478.5 138.3C477.5 144.5 475.3 151.9 473.2 158.8C471.1 165.8 467.2 176.5 466 180M500.6 42.5C502.8 44.1 509.2 49 513.7 51.9C518.2 54.9 524.6 54.4 527.4 60.4C530.2 66.4 531.1 79.2 530.5 88.1C530 97 525.8 105 524.3 113.9C522.8 122.9 521.7 134 521.5 141.7C521.2 149.5 522.3 154.2 522.8 160.6C523.3 167 524.2 176.8 524.5 180M569.7 0C570.2 2.6 571.6 10.3 572.8 15.8C574 21.3 575.6 26.7 577 32.8C578.4 38.9 581.9 44.9 581.4 52.6C580.9 60.4 575.8 70.2 574.1 79.2C572.4 88.3 570.2 98.5 571.5 107.1C572.7 115.7 579.7 124.4 581.5 130.9C583.3 137.3 581.9 140.9 582.2 145.6C582.4 150.3 582.8 153.2 582.9 158.9C583.1 164.7 583 176.5 583 180M612.2 0C612.2 3.3 611.8 13.3 612 20C612.3 26.8 613.7 34 613.8 40.6C614 47.3 612.9 53.5 612.8 60C612.8 66.6 613.2 73.2 613.3 79.8C613.5 86.3 613.3 92.7 613.6 99.3C613.9 106 614.7 116.3 614.9 119.6M527.2 61.2C528.9 63.1 534.4 69 537.8 72.6C541.3 76.1 544.1 79.1 547.7 82.4C551.4 85.7 556 89.6 559.6 92.6C563.2 95.6 565.3 95 569.2 100.4C573.1 105.8 580.7 120.9 583 125M527.2 66.5C530.8 66.2 541.7 62.9 549.2 64.7C556.8 66.4 568.5 75 572.4 77.1M543.1 16C545.8 17.1 553.6 20.5 559 23.1C564.5 25.8 569.9 29.5 575.8 31.7C581.7 33.9 588.2 34.8 594.4 36.1C600.5 37.4 606.7 38.9 612.8 39.3C619 39.6 625.3 38.3 631.4 38.1C637.4 37.8 644 36.8 649.3 37.8C654.6 38.9 659 42.1 663.4 44.6C667.7 47.2 670 51.8 675.5 53C681.1 54.2 689.7 52 696.6 51.6C703.5 51.2 713.6 50.7 717 50.5M612.2 16C616.6 16.3 631.2 18.3 638.2 18.2C645.1 18.1 648.9 16.6 653.9 15.3C658.8 14.1 665.7 11.4 668.1 10.6M649.5 0C649.3 3.1 648.6 12.7 648.6 18.7C648.7 24.8 649.3 31.1 649.9 36.4C650.5 41.7 651.8 48.2 652.1 50.5M668.1 0C668.6 4.3 670 17 671.3 25.9C672.7 34.8 674.3 46.6 676.2 53.3C678.2 60 680.8 61.7 682.9 66.1C685.1 70.6 688.4 74.9 689.2 79.9C690 84.9 688.3 90.7 687.9 96C687.5 101.3 684.7 105.4 686.6 111.6C688.5 117.8 694.1 130.8 699.1 133.2C704.2 135.5 714 126.7 717 125.4M583 125C585.2 121.8 590.9 111.6 596.3 105.9C601.7 100.2 608.3 93.6 615.4 90.9C622.5 88.2 632.2 89.1 638.8 89.8C645.3 90.5 649.4 93.1 654.7 95C660.1 96.9 668.1 100 670.7 101M638.8 90.4C641.4 88.6 649.8 83.6 654.1 79.6C658.4 75.6 661 70.8 664.7 66.4C668.3 62 674.2 55.4 676.1 53.2M583 134.3C585.4 135.3 592.8 138.3 597.6 140.8C602.5 143.2 609.8 147.5 612.2 148.9M668.1 148.9C671.7 147 683.7 138.5 689.6 137.5C695.5 136.5 699 141.5 703.6 143C708.2 144.6 714.8 146.2 717 146.8M426.1 98.4C427.5 100.9 432.4 108.9 434.1 113.5C435.9 118.2 436.3 124.2 436.8 126.3M362.3 93.1 L373 95.7M540.5 0C540.9 2.6 543.4 10.7 543.1 15.7C542.8 20.8 540.3 25.2 538.6 30.4C536.9 35.6 535 41.8 533.1 47C531.2 52.1 528.2 58.8 527.2 61.2M500.6 42.5 L474 34.6M583 159.5C580 161.4 569.7 167.3 564.8 170.7C559.9 174.1 555.6 178.5 553.8 180M583 138.3C585.1 141.9 590.9 154.6 595.7 160.4C600.6 166.2 609.5 170.8 612.2 172.8M673.4 159.5C676.5 161.4 684.7 171 692 171C699.3 171 712.8 161.4 717 159.5M734.4 53.6C738.3 52.6 749.6 49.7 757.9 47.6C766.3 45.5 776.1 41.8 784.5 41C792.9 40.2 804.2 42.6 808.1 42.9M808.1 42.9C809.8 44.4 814.4 49 818 52C821.7 55 825.5 59 830 61C834.5 63 840.1 63 845 63.9C849.9 64.8 854.8 65 859.6 66.3C864.4 67.7 869 70.4 873.7 71.8C878.5 73.1 881.9 72.8 888 74.6C894 76.4 903.3 80.5 909.9 82.7C916.6 84.9 922 86.5 927.8 87.8C933.6 89.2 941.9 90.6 944.7 91.1M808.1 42.9C809.8 46.6 814.6 57.4 818.2 65.1C821.8 72.8 826.3 83.6 829.9 89.1C833.4 94.7 836.3 95.3 839.7 98.3C843.1 101.3 845.7 102.2 850.3 107.2C854.9 112.2 862.7 121.8 867.3 128.4C871.9 135 876 143.8 877.8 146.8M877.8 146.8C880.6 144.7 889.1 138.8 894.5 134.1C899.9 129.4 904.9 123.4 910.1 118.6C915.2 113.8 919.5 110 925.3 105.4C931.1 100.8 941.5 93.5 944.7 91.1M734.4 53.6C733.8 58 732.6 71.3 730.6 80.2C728.7 89.1 725.2 99.2 722.9 106.8C720.6 114.3 718 122.3 717 125.4M734.4 53.6C736.2 55.4 742 60.8 745.3 64.4C748.7 68.1 749.2 72.9 754.3 75.5C759.3 78.1 768.7 78.5 775.8 79.8C783 81.1 793.8 82.5 797.4 83.1M808.1 42.9C806.4 45.9 800 54.2 797.8 60.8C795.7 67.4 794.4 75.6 795.3 82.6C796.1 89.6 798.6 98.5 803 102.7C807.4 106.8 818.1 103.6 821.6 107.5C825.2 111.3 823.8 122.9 824.2 125.9M717 16.1C721.4 16.8 736.7 20.6 743.5 20.5C750.2 20.4 752.7 17.1 757.7 15.4C762.7 13.8 768.6 13.2 773.5 10.6C778.3 8 784.5 1.8 786.7 0M717 34.8 L734.4 53.6M842.9 0C842.5 4.6 840.4 18.7 840.3 27.5C840.2 36.4 842.2 44.4 842.3 53.1C842.3 61.8 839.7 72.8 840.5 79.5C841.4 86.3 844.8 88.9 847.4 93.5C850 98.1 854.8 104.9 856.3 107.2M875.1 0C875.4 4.4 875.8 19.8 877.1 26.5C878.3 33.3 880.7 35.9 882.6 40.3C884.6 44.8 887.7 47.3 888.6 53.1C889.6 58.8 888.5 71.4 888.5 75M899.2 0C900.1 2.2 903.1 8.8 904.8 13.4C906.5 17.9 906.7 21.9 909.3 27.6C911.8 33.3 917.5 40.5 920.2 47.6C922.8 54.7 923.8 63.1 925.3 69.9C926.7 76.7 928.1 85.3 928.7 88.4M808.1 42.9C810.9 41.6 819.5 38.1 824.8 35.3C830.2 32.6 834.5 27.8 840.1 26.4C845.6 25 851.8 27 858.1 27.1C864.4 27.1 871.9 26.6 877.9 26.5C883.9 26.5 888.6 26.6 894.1 26.7C899.6 26.8 905 24.4 910.7 27.2C916.4 30 921.2 39.6 928.2 43.6C935.2 47.5 948.7 49.7 952.8 50.9M759.9 115.2C763.8 117 776.9 120.3 783.2 126C789.4 131.7 794.1 143 797.2 149.6C800.3 156.2 800.1 160.5 801.9 165.6C803.8 170.6 807.1 177.6 808.1 180.1M759.9 115.2C757 117.5 750.1 125.6 742.9 128.7C735.8 131.8 721.3 133.1 717 134M759.9 115.2C761.3 112.9 766.1 105.6 768.7 101.2C771.3 96.7 771.1 91.6 775.4 88.6C779.7 85.6 791.5 84 794.7 83.1M717 146.8C719.2 148 725.8 151.8 730.4 154C735 156.3 739.1 159.6 744.4 160.2C749.7 160.8 756.2 158.4 762.2 157.7C768.2 157 776.9 152.4 780.5 156.1C784.1 159.8 783.4 176 784 180M877.8 146.8C878.7 149.2 881.8 155.6 883.6 161.1C885.4 166.7 887.7 176.9 888.5 180M877.8 146.8C874 147.9 863.4 151.5 855.4 153.3C847.5 155.2 836 155.4 830 158C823.9 160.6 822.9 165.3 819.3 169C815.6 172.7 810 178.2 808.1 180.1M877.8 146.8C881.3 147.2 892.5 148 898.7 149.3C904.9 150.6 908.5 152.6 914.8 154.6C921.1 156.6 930 159.2 936.4 161.2C942.8 163.2 948.2 165 953.1 166.7C958.1 168.5 964 170.7 966.2 171.5M915.3 155.4 L912.6 180.1M944.7 91.1C942.6 94.6 935.7 105.9 931.7 112.1C927.7 118.4 922.5 125.9 920.6 128.6M904.6 83.1C904.6 87.1 902 102.1 904.7 107.1C907.3 112 918 111.6 920.6 112.5M959.5 80.4C960.3 82.6 963.2 89.3 964.7 93.8C966.2 98.3 966.4 101.6 968.4 107.4C970.5 113.2 975.5 125.1 976.9 128.6M936.7 160.8 L944.7 180M934 91.1C934.4 89.7 934.3 84.6 936.2 82.6C938.1 80.5 942.5 79 945.4 79C948.3 79 951.9 80.4 953.7 82.6C955.5 84.7 956.5 89.1 956.4 91.9C956.4 94.7 955.1 97.7 953.2 99.4C951.4 101.1 948.4 102 945.4 102C942.5 102.1 937.6 101.7 935.7 99.9C933.8 98 934.3 92.6 934 91.1M923.3 91.1C923.8 88.9 922.6 81 926.2 78C929.8 75.1 939.3 72.8 945 73.2C950.8 73.6 958.2 79.2 960.8 80.4M923.3 91.1C924.2 93.9 925 104.6 928.6 107.8C932.2 111 940.2 111 945.1 110.5C950 110 954.7 108.1 958 104.9C961.3 101.7 963.7 93.4 964.8 91.1M904.6 83.1 L923.3 91.1M867 128.6C870.6 128.1 881.5 127.4 888.6 125.6C895.8 123.8 906.4 119.2 909.9 117.9M743.8 21.4C744.8 23.7 747.7 30.6 750 35.1C752.2 39.5 756 46 757.2 48.2M362.3 222.5C364.4 221.8 370.5 219.9 374.9 218C379.2 216 383.4 213.3 388.3 211.1C393.1 208.8 398.8 207.3 404.2 204.7C409.5 202.1 414.4 194.7 420.5 195.3C426.7 195.9 436.7 203.4 441.2 208.4C445.8 213.4 444.2 221.2 447.7 225.4C451.3 229.6 457.7 231 462.4 233.6C467.1 236.2 471.1 238.4 475.9 241.3C480.6 244.2 485.9 247.8 491 251C496.1 254.2 502.2 257.7 506.5 260.5C510.7 263.3 514.9 266.5 516.5 267.7M362.3 262.4C366.6 261.6 380.9 259.8 388.1 257.8C395.3 255.7 400.3 252.8 405.6 249.9C410.9 247.1 415.5 243.6 420.1 240.6C424.7 237.7 428.9 234.9 433.4 232.3C438 229.8 445.1 226.4 447.4 225.2M362.3 307.6C364.6 309.5 371.8 315.2 376.2 318.8C380.7 322.5 384.3 328.5 389.1 329.5C394 330.4 399.9 326.1 405.1 324.5C410.3 323 413 320.4 420.1 320.2C427.2 319.9 441 321.8 447.9 323C454.7 324.3 456.7 326.4 461.3 327.9C465.8 329.4 470.2 330.4 474.9 332C479.6 333.6 482.6 336.1 489.5 337.3C496.4 338.5 509.4 337.9 516.3 339.2C523.1 340.5 526.1 343 530.7 344.9C535.2 346.7 538.1 347.9 543.7 350.4C549.4 352.9 560.9 358.4 564.4 360M373 294.3 L394.2 283.7M431.4 295.7C434 296.7 439.5 301.8 446.6 302.1C453.6 302.5 466.7 299.4 473.9 297.5C481.1 295.6 484.3 293.1 489.7 290.7C495 288.3 501.5 287 506 283.2C510.4 279.4 514.8 270.3 516.5 267.7M447.4 302.3C451.1 303.1 464.9 307.8 469.3 306.9C473.8 306 473.2 298.6 474 297M396.9 360C397.4 356.5 401.4 344.1 400.1 338.9C398.8 333.7 390.8 330.6 388.9 328.9M434.1 326.2C434.4 330.1 434.1 344 435.9 349.6C437.6 355.3 443.3 358.3 444.7 360.1M489.9 336.9C490.9 333.9 493.2 325.8 495.7 319.1C498.2 312.5 502.4 304.1 505 297C507.6 289.8 509.3 281.1 511.2 276.3C513.1 271.4 515.6 269.2 516.5 267.7M516.5 267.7C516.9 270.8 518.7 278.7 518.6 286.3C518.6 294 518.4 306.3 516.3 313.5C514.1 320.8 509 324.6 505.5 329.7C501.9 334.8 496.6 339.3 494.9 344.3C493.2 349.4 495.2 357.5 495.3 360.1M516.5 267.7C520.1 267.7 532.1 268.4 538.2 267.7C544.2 267.1 547.9 265.2 553 264C558.2 262.8 564.4 261.4 568.9 260.3C573.5 259.1 578.4 257.6 580.3 257.1M537.8 259.8C538.3 264.3 539.9 278 540.8 286.9C541.7 295.7 543.4 303.9 543.3 312.7C543.3 321.4 539.2 331.4 540.3 339.3C541.3 347.2 548.2 356.6 549.8 360.1M516.5 312.9C516 316.8 514.3 328.3 513.2 336.1C512.1 344 510.4 356.1 509.9 360.1M524.5 180C525.9 184.3 532.2 196.9 533.2 205.7C534.2 214.5 531.5 224.2 530.6 232.7C529.7 241.3 530.2 251.3 527.9 257.1C525.5 262.9 518.4 266 516.5 267.7M553.8 180C552.8 184.5 547.9 199.3 548.2 207.3C548.6 215.2 556.8 220.3 555.9 227.8C555.1 235.3 546.2 245.6 543.2 252.2C540.2 258.9 538.7 265.2 537.8 267.7M463.4 209.2C466.1 208 474.5 204.2 479.8 201.5C485 198.8 489.8 194.5 495 193C500.1 191.5 505.2 192.9 510.6 192.6C516 192.3 520.3 191.4 527.5 191.1C534.6 190.7 549.4 190.7 553.8 190.6M543.1 297C546.1 296.7 554.8 296 561.1 295.5C567.4 295.1 575.1 295.3 580.8 294.5C586.6 293.6 590.3 291.7 595.6 290.3C601 288.8 606.3 287.5 612.9 285.9C619.6 284.3 629.5 283.6 635.6 280.7C641.8 277.8 646.5 272.8 649.8 268.4C653.1 263.9 653.3 258.4 655.5 253.8C657.6 249.3 661.5 243.3 662.8 241.2M580.3 257.1C583.8 254.4 595.8 240.5 601.2 240.8C606.5 241.2 610.5 251.7 612.3 259.2C614.1 266.6 612.2 276.8 611.9 285.8C611.6 294.8 610.5 304.3 610.4 313.4C610.4 322.4 612.1 332.6 611.5 340.4C610.9 348.1 607.7 356.8 606.9 360.1M601.6 241.2C601 237.6 596.3 225.3 598.2 219.7C600.2 214 607.2 210.2 613.1 207.1C619.1 204 626.5 201.7 633.9 201.2C641.3 200.6 653.5 203.5 657.4 203.9M612.2 206.6C612.6 204 612.1 195.3 614.4 190.9C616.6 186.5 623.7 181.8 625.5 180M662.8 241.2C662.2 238 660.3 228.4 659.4 222C658.5 215.7 657.1 210.1 657.2 203.1C657.4 196.1 659.6 183.8 660.1 180M662.8 241.2C664.9 243.9 671.8 251 675.9 257.6C679.9 264.3 682.5 274 687 281C691.5 288 700.6 294 702.9 299.6C705.2 305.1 701.2 309.5 700.7 314.5C700.2 319.4 697.1 324.6 699.8 329.3C702.5 334.1 714.1 340.6 717 342.8M662.8 241.2C658.9 239.8 647.1 232.5 639.6 233C632.1 233.6 622.2 239.8 617.7 244.3C613.1 248.7 613.2 257.2 612.2 259.8M673.4 239.8C675.8 239.4 682.9 237.8 687.8 237.2C692.7 236.6 698 236.8 702.9 236.2C707.7 235.6 714.6 233.9 717 233.4M676.1 257.1C679.5 257.5 690.2 258.9 697 259.6C703.8 260.3 713.7 261.1 717 261.4M686.7 281C685.5 283.3 682 290.2 679.3 294.7C676.7 299.1 676 303.1 671 307.5C666 312 657.1 318.3 649.1 321.1C641.1 324 627.3 324.3 622.9 324.9M622.9 324.9C622.3 321.1 617.7 309.5 619.5 302.2C621.3 294.8 631.2 284.6 633.5 281M575 332.9C578.7 333.6 590.6 336.2 596.8 337.3C603 338.3 608.2 337 612.5 339.1C616.8 341.2 619.2 346.2 622.7 349.7C626.2 353.2 631.7 358.4 633.5 360.1M564.4 360C568 358.3 580.1 352.4 585.9 350C591.7 347.6 594.9 347.4 599.3 345.6C603.7 343.9 610.1 340.5 612.2 339.5M717 286.4C715.4 288.2 709.8 295 707.4 297.3C705 299.5 703.4 299.2 702.6 299.6M717 196C713.8 196.4 703.3 201.1 697.8 198.4C692.3 195.8 686.3 183.1 684 180M505.9 259.8C509.4 259.9 523.7 256.6 527.1 260.6C530.6 264.6 530 279.8 526.3 283.8C522.7 287.7 508.7 288.2 505.3 284.2C501.9 280.2 505.8 263.8 505.9 259.8M657.4 233.2C660.5 233.4 672.8 230.5 675.5 234.5C678.3 238.6 676.8 253.6 674 257.2C671.2 260.8 661.6 260.2 658.8 256.2C656.1 252.2 657.7 237 657.4 233.2M717 214.8C721.5 213.5 734.8 209.3 743.8 207C752.8 204.8 765 204.1 771.2 201.5C777.4 198.9 779 195.1 781.1 191.5C783.3 187.9 783.5 181.9 784 180M781.3 190.7C782.6 193 786.2 199.9 788.8 204.4C791.5 209 791.4 215.2 797.2 218C803 220.8 816.4 221.5 823.5 221.1C830.6 220.6 834.6 216.9 840 215.4C845.4 213.9 850.7 213.4 855.9 212C861.2 210.5 866.1 208.3 871.5 206.6C876.9 205 883.3 203.6 888.3 201.8C893.3 200 897.2 197.4 901.6 195.7C906 193.9 909.9 192.9 914.8 191.2C919.6 189.4 925.8 187.3 930.8 185.4C935.8 183.6 942.4 180.9 944.7 180M824.2 220.2C825 216.3 824.6 203.3 829 196.6C833.5 189.9 847.3 182.8 851 180M824.2 220.2C825.9 223.7 831.2 235.9 834.7 241.1C838.2 246.3 841.2 248.2 844.9 251.5C848.6 254.8 851.4 258.7 856.9 260.6C862.3 262.6 872.1 261.7 877.7 263.2C883.3 264.6 886.2 267.4 890.7 269.3C895.1 271.1 899.2 273.6 904.3 274C909.4 274.4 916.7 273.9 921.2 271.7C925.7 269.4 929.7 262.3 931.3 260.4M856.3 212.2C858.1 214.8 862.5 224.6 867 227.9C871.5 231.1 877.7 230.2 883.2 231.6C888.7 232.9 894.3 236.6 899.8 236C905.2 235.4 910.2 227.8 915.9 227.8C921.6 227.8 929 234.4 933.8 235.8C938.6 237.2 942.9 236.2 944.7 236.3M888.5 180C888.5 183.5 887.6 194.3 888.3 200.9C889.1 207.4 891.2 213.4 892.9 219.2C894.7 225.1 896 229 898.8 235.8C901.6 242.7 908.6 254 909.6 260.3C910.5 266.7 905.4 271.5 904.6 273.8M915.3 190.7C916.1 193.4 917.3 202.6 920.5 207C923.7 211.5 931.9 212.3 934.3 217.3C936.7 222.2 935.3 229.7 934.8 236.9C934.3 244.1 931.9 256.5 931.3 260.4M856.3 260.4C858 257.4 862.7 246.7 866.2 242.2C869.8 237.7 875.8 235 877.8 233.6M856.3 260.4C854.7 262.7 850.9 271.5 846.3 274.3C841.8 277.1 833.4 274.2 828.9 277.1C824.3 279.9 821.6 286.4 819.1 291.7C816.5 296.9 814.4 305.8 813.5 308.6M797.4 217.5C796.3 221.2 791.5 232.7 791.1 239.8C790.7 246.8 794.1 253 795 259.9C795.9 266.8 798.1 275.2 796.7 281.2C795.2 287.1 790.5 291.6 786.2 295.7C781.8 299.8 773.2 304.2 770.6 305.9M717 233.4C721.4 232.4 734.5 228.8 743.5 227.6C752.6 226.4 762.3 227.8 771.3 226.1C780.3 224.4 793 218.9 797.4 217.5M717 261.4C721.4 260.9 736 258.9 743.2 258.4C750.4 257.9 755.4 259.8 760.1 258.2C764.7 256.6 767.3 252.1 770.9 249C774.5 245.9 777.4 244.8 781.8 239.6C786.2 234.3 794.8 221.2 797.4 217.5M759.9 257.7C760.2 261.8 760.2 274.1 762 282.2C763.8 290.2 769.2 302 770.6 305.9M770.6 305.9C767.5 308.2 758.2 315.6 751.9 319.8C745.6 323.9 738.8 326.9 733 330.7C727.2 334.6 719.7 340.8 717 342.8M770.6 305.9C771.5 309 772.6 319.9 776 324.3C779.5 328.6 786.6 332.6 791.5 332.1C796.4 331.6 802.7 325.2 805.4 321.2C808.2 317.2 810.7 310.3 808 308C805.4 305.6 795.6 307.6 789.3 307.3C783.1 306.9 773.7 306.2 770.6 305.9M733.1 330C734.9 332.8 739.6 341.8 743.9 346.8C748.1 351.8 756.1 357.8 758.5 360.1M792 332.7C790.5 336 784.9 347.5 783.1 352.1C781.3 356.6 781.6 358.7 781.3 360.1M805.4 322C808.5 323.4 818.5 328.5 824.1 330.2C829.7 331.8 834.3 331.6 839.2 332C844.1 332.4 850.6 330.2 853.4 332.6C856.3 334.9 855.8 343.9 856.3 346.1M904.6 273.8C904.7 276.8 907.1 285.9 905.4 291.8C903.6 297.6 897.5 303.3 894.1 308.9C890.7 314.4 887.2 319.9 885 324.9C882.7 329.9 885.5 335.3 880.8 338.9C876 342.4 860.4 344.9 856.3 346.1M821.5 330 L821.5 340.8M444.7 360.1C446.9 363.8 453.7 375.2 457.7 382.3C461.7 389.4 465.4 395.9 468.7 402.7C472 409.5 476.4 416 477.4 423.1C478.3 430.3 475.4 440 474.4 445.5C473.4 450.9 471.8 454.2 471.3 455.9M495.3 349.5C491.7 351.4 479.5 358 473.7 360.8C467.9 363.7 464.8 364.6 460.5 366.8C456.1 369 451.9 371.5 447.4 374C443 376.4 438 378.7 433.6 381.3C429.1 383.9 424.9 386.5 420.7 389.5C416.4 392.6 412.4 396.2 408.1 399.7C403.8 403.2 398.9 406.8 394.8 410.5C390.7 414.3 387.2 418.1 383.6 422.2C380 426.4 376.5 429.8 373 435.5C369.5 441.2 365.3 450.4 362.6 456.4C359.9 462.5 357.9 469.3 357 471.8M373 434.6C375.1 438.1 381.8 450.7 385.9 455.6C390.1 460.5 393.8 461.2 397.8 464C401.9 466.8 405.8 469.2 410.4 472.4C415 475.5 418.7 481 425.3 482.9C431.9 484.8 445.9 483.7 450.1 483.8M373 434.6C374.8 435.5 382.6 441 384.3 440C385.9 439.1 384.7 429.8 382.8 428.9C380.9 428 374.6 433.7 373 434.6M495.3 360.1C494.2 364.4 489.4 377.3 489.1 386.2C488.7 395.1 492.3 405.4 493.4 413.5C494.4 421.7 493.5 429.9 495.5 435.1C497.6 440.4 504.2 443.6 505.9 445.3M509.9 360.1C510.7 364.6 512.6 379.8 514.6 387C516.6 394.1 521.2 397.6 522.1 402.9C522.9 408.3 521.3 414.4 519.5 418.8C517.7 423.2 512.6 427.6 511.2 429.3M434.1 413.4C436.4 414.6 442.4 419.7 447.7 420.8C453.1 421.9 460.1 420.4 466.3 419.9C472.5 419.4 478.6 419.6 485.1 418C491.6 416.3 499.6 411.5 505.3 409.9C511 408.2 516.9 408.3 519.2 408M447.4 421.3C445.7 424.6 441.7 436.7 437.3 440.7C432.8 444.7 423.6 444.5 420.8 445.3M505.9 445.3C503.3 447 493.7 452 490.2 455.7C486.8 459.3 484.3 463.5 485.2 467C486.1 470.6 492.8 473.4 495.4 476.7C497.9 480.1 499.7 485.3 500.6 487M521.8 437.3C522.7 440.4 523.3 451.3 526.8 455.8C530.3 460.2 538.3 460 542.8 463.7C547.3 467.4 551.7 474.1 554 477.9C556.3 481.8 556 485.5 556.4 487M543.1 463.9C545.6 461.7 551.8 455.2 558.3 450.7C564.8 446.2 577.2 439.7 582.2 436.6C587.2 433.5 587.3 432.7 588.3 432M519.2 418.7C523.3 418.2 535.6 416.6 543.7 416.1C551.8 415.7 560.1 417.7 567.8 415.9C575.5 414.1 582.7 407.7 590.1 405.2C597.5 402.7 606.9 402.4 612.4 400.8C617.9 399.3 621.1 396.9 622.9 396.1M549.8 360.1C550.6 364.5 553.1 378.8 554.6 386.7C556.1 394.6 559.5 402 558.9 407.3C558.3 412.6 552.4 416.8 551.1 418.7M606.9 360.1C606.5 364.4 604.2 377.5 604.5 386.2C604.9 395 607.8 403.5 609 412.5C610.1 421.5 610.5 431.1 611.4 440.3C612.2 449.4 614.1 459.6 614.2 467.4C614.4 475.2 612.6 483.7 612.2 487M633.5 360.1C636 361.5 641.7 367.2 648.7 368.8C655.7 370.5 668.1 368.4 675.4 369.9C682.7 371.5 685.5 377.5 692.4 378.3C699.3 379.2 712.9 375.6 717 375.1M622.9 396.1C626.5 396.2 638.1 396.1 644.6 396.8C651.1 397.6 656.6 400.8 662 400.6C667.3 400.3 674.1 400.3 676.4 395.4C678.8 390.4 676.1 374.9 676.1 370.8M676.1 370.8 L685.4 360.2M665.4 398.7C664.6 402.8 661.6 416.3 660.5 423.2C659.4 430.2 659.5 434.9 659 440.3C658.5 445.8 657.7 453.3 657.4 455.9M676.1 394.7C678.3 398.9 685.4 412.7 689.3 419.4C693.2 426.2 694.9 431.5 699.5 435.5C704.2 439.4 714.1 441.9 717 443.1M673.4 445.3C676.6 444.2 688 440.8 692.4 439.1C696.8 437.3 698.7 435.4 700 434.6M681.4 445.3C680.8 448.8 678.7 459.8 677.8 466.8C677 473.8 676.4 483.6 676.1 487M717 408.4C715.1 409.1 708.7 408.2 705.9 412.6C703 417 701 431 700 434.6M600.3 458.6C600.2 459.9 597.6 465.5 599.9 466.9C602.3 468.4 611.8 469.2 614.3 467.2C616.8 465.2 617.2 456.5 614.9 455.1C612.5 453.7 602.7 458 600.3 458.6M678.7 485.1 L697.3 482.5M713.3 455.9 L708 463.9M836.2 387.4C834.2 389.2 828.2 394.6 823.9 398.2C819.7 401.9 813.9 404.6 810.7 409.1C807.5 413.7 807.9 420.1 804.8 425.4C801.6 430.8 794.8 436 791.8 441.2C788.8 446.5 790 452.4 786.9 456.9C783.8 461.4 776.2 463.3 773.1 468.3C769.9 473.3 768.8 483.9 767.9 487.1M836.2 387.4C837.5 385.7 841.3 381.6 843.7 377.2C846.2 372.7 849.8 363.4 851 360.6M836.2 387.4C833.3 386 825.1 380.6 818.9 379C812.8 377.3 805 378.2 799.3 377.5C793.5 376.8 788.3 376.5 784.3 374.6C780.4 372.7 776.2 368.6 775.6 366.1C775.1 363.7 780.4 361.1 781.3 360.1M836.2 387.4C837 389.7 840.9 397 841.1 401.4C841.4 405.8 837 411.2 837.8 413.8C838.5 416.4 844.3 416.3 845.6 416.9M836.2 387.4 L851 384.7M775.9 365.9C772.8 366.5 762.5 366.6 757.1 369.3C751.7 372.1 747.5 377.9 743.6 382.4C739.6 386.8 737.7 391.8 733.3 396.1C728.8 400.5 719.7 406.4 717 408.4M743.8 382C743 384.6 738.2 393.3 739 397.7C739.7 402.1 743.9 405.6 748.3 408.4C752.6 411.2 759.5 411.5 765.1 414.3C770.7 417.2 778.9 420.2 781.9 425.6C784.9 431 784.6 439.9 783.2 446.9C781.7 454 774.9 464.3 773.3 467.8M717 375.1C718.9 374.5 723.8 370.8 728.3 372C732.7 373.1 741.2 380.3 743.8 382M757.2 368.6 L758.5 360.1M781.3 424.9 L805.4 424.9M781.3 424.9C777.8 425.7 766.6 429.3 760 429.8C753.4 430.4 747.1 427 741.7 428.1C736.4 429.2 732.2 433.9 728 436.4C723.9 438.9 718.8 442 717 443.1M717 465.1C719.6 466.3 728.3 468.7 732.8 472.4C737.3 476 742 484.6 743.8 487.1M751.8 467.8C753.6 466.5 759.1 460.3 762.6 460.3C766.2 460.3 771.5 466.5 773.3 467.8M784 446.3C788.4 446.4 804.4 447.2 810.2 446.8C816 446.3 817.4 444.2 818.8 443.6M733.1 395.4 L717 387.4M100.1 66.8C102.1 63.9 108.3 53.8 112.1 49.6C115.8 45.4 120.7 43 122.4 41.7M133.5 11.1 L136.3 0M154.4 11.1C155.1 9.8 154.8 5 158.8 3.1C162.7 1.2 174.8 0.5 178 0M158.6 44.5 L160 66.8M189.2 66.8C191 63 197.4 48.2 200.2 44C203 39.8 204.9 42.1 205.9 41.7M194.7 52.9C197.4 53.4 207.3 53.8 211 56.1C214.7 58.4 216 65 217 66.8M261.5 66.8C263 64 268.5 53.9 270.4 50C272.2 46.1 272.2 44.3 272.6 43.1M294.9 9.7C296.6 8.7 298.7 4.6 305.3 3.3C311.8 2.1 326.3 2.5 334.3 2.3C342.3 2.1 347 2.5 353.4 2.1C359.8 1.7 369.5 0.4 372.8 0M199.1 360.5C195.3 362 184.2 365.4 176.4 369.3C168.6 373.3 158.8 380.3 152.2 384.1C145.7 387.9 142 389.2 137.1 392.2C132.1 395.1 125.8 399.3 122.4 401.9C119 404.4 117.3 403.6 116.9 407.5C116.5 411.3 120.4 420.2 119.9 425C119.3 429.7 117.4 432.9 113.6 435.8C109.7 438.7 99.5 441.4 96.6 442.5M199.1 360.5C199.3 363.9 202.1 375.8 200 380.8C197.9 385.7 190.7 387.2 186.7 390C182.7 392.9 180.9 394.6 176.2 397.9C171.5 401.3 163.3 406.1 158.3 410C153.3 413.9 152.8 418.6 146.4 421.1C140.1 423.6 124.5 424.3 120.1 424.9M199.1 360.5C202.4 362.1 211.8 366.8 218.8 370.2C225.7 373.6 233.3 377.8 240.8 381C248.3 384.2 257.3 387.2 263.7 389.4C270 391.5 273.7 392.4 278.7 394C283.7 395.7 288.7 398.4 293.6 399C298.5 399.7 303.4 398.6 308 397.9C312.7 397.2 317.9 395.2 321.7 394.8C325.5 394.4 329.4 395.5 330.9 395.6M199.1 360.5C202.9 360.4 214.8 360.5 222 359.9C229.2 359.3 235.4 356.1 242.3 356.8C249.2 357.5 256.2 364.9 263.6 364.1C271.1 363.3 283.1 353.8 287 351.7M243 357.6C242.5 361.6 240.7 375.3 240 381.8C239.4 388.3 239.8 391.1 239.4 396.3C238.9 401.5 237.4 405.7 237.4 413C237.4 420.4 236.6 432 239.4 440.4C242.3 448.7 247.3 458.2 254.3 463.1C261.3 468 274.4 468.3 281.4 469.7C288.3 471.1 291.2 470.8 296.1 471.6C300.9 472.3 304 471.5 310.3 474.1C316.6 476.7 329.9 484.8 333.8 487M322.1 381 L322.1 395.6M152.3 383.9C150.5 383.6 143.8 381.9 141.4 381.9C139 381.9 138.3 383.6 137.6 383.9M155.2 375.1 L152.3 383.9M29.3 348.8C28.7 352.1 25.9 362.2 25.9 368.5C25.8 374.8 29.1 379.5 28.8 386.6C28.6 393.7 26 404.6 24.2 411C22.3 417.4 18.7 422.6 17.6 424.9M52.7 410.3C56.7 410.1 69.8 410.9 76.7 409.5C83.7 408.1 87.5 402.2 94.2 401.9C101 401.5 113.3 406.4 117.1 407.3M93.7 401.5C94.7 397.7 98.8 384.3 99.8 378.9C100.8 373.6 99.6 370.9 99.6 369.3M114.2 436.6C117.5 439 127.5 445.6 133.9 450.6C140.3 455.6 146.7 462.3 152.7 466.7C158.8 471.1 166.3 473.9 170.2 477.3C174 480.6 174.8 485.4 175.7 487M52.7 410.3C53.2 414.7 57.3 431.7 55.8 437.1C54.3 442.5 45.9 441.6 43.9 442.5M400 419.1C396.7 421.5 385.2 427.2 380 433.4C374.7 439.6 372.3 449.2 368.5 456.5C364.7 463.7 362 471.9 357.2 477C352.4 482.1 342.6 485.3 339.7 487M380.7 433.7C379.6 435.1 373.9 440.9 374.3 441.8C374.8 442.8 382.1 439.9 383.6 439.6M351.4 351.7C352.9 354.5 360 361.6 360.5 368.4C361 375.2 355.3 388.7 354.3 392.7M392.4 351.7 L400 342.9M377.7 448.3C379.8 450.7 386.1 459 389.8 462.4C393.6 465.9 398.3 467.8 400 468.8M0 445.4C1.3 444.6 5.1 443.6 7.9 440.3C10.8 437 14 430.2 17.1 425.7C20.1 421.2 24.8 415.3 26.4 413.2M0 445.4C2.1 446.5 11.4 449 12.4 452C13.3 454.9 6.9 461.2 5.9 463" fill="none" stroke="#f3bb6e" stroke-width="1.25" stroke-linejoin="round" stroke-linecap="round"/>
<path d="M362.3 74.4L364 75.6L366.6 78.2L371.2 78.8L372.8 79.3L373.6 82.4L372.8 84.2L371.6 86.6L372.6 90.5L370.9 94L371 95.5L370.5 97.8L372.1 100.6L370.1 103.7L370.3 107.4L369.5 110.3L369.1 112.7L368.1 111.8L364.9 112.9L362.3 114.3M479.3 23.9L481.3 23L484.3 24.9L488.6 24.5L488.9 22.7L493.6 21.9L495.8 22.4L499.2 21.5L501.4 22.2L502.3 21.6L506.8 23.3L507.7 23.4L512.3 23.1L514.1 23.2L515.7 25.1L519.7 24L520.8 24L524.8 25.3L526.6 24.9L530.1 26.5L533.3 26.5L534.4 25.5L538.4 25.4L541 23.5L543.9 23.3L546.7 23.7L548.4 20.6L552.2 20.8L554.7 19.3L553.3 23.6L554.1 24.7L554.4 28.7L553.8 31.3L555.3 34.1L554.8 37.4L556.9 40.7L555.9 43.1L558.2 45.3L559.5 47.8L564 48.9L565 51.1L567.1 51.9L570.9 53.1L571.5 53.5L574.4 56L576.5 54.8L580.9 54.5L581.7 55L585.9 54.3L588.8 52.7L591.9 53.7L591.1 54.9L593.6 58.5L594.4 60.2L596 62.9L597.9 67.4L598 69.3L602.2 69.3L605.1 72.4L606.6 72.1L610.5 73.4L612 75.6L615.6 73.4L616.9 72.7L620.1 73.7L623.7 72.9L626.4 72L627 70.5L631.5 73.4L631.8 74L634.9 75.7L636.8 76.8L638.8 79.8M628.2 2.7L630.1 4.3L631.2 4.9L635.8 8.2L637.8 9.4L639.6 11.6L642.5 9.4L644.5 10L647.3 10L649.6 11.7L652.4 10L654.8 10.5L658.6 10.1L659.6 11L661.8 10.9L666.6 10.7L664.9 13.2L665.7 15L664.7 17.7L665.2 21L665.3 23.3L664.9 26.7L666.9 29.5L666.3 32.3L665.4 35.1L666.2 37.3L666.7 39.8L666 41.9L665.8 45.2L666.4 48.1L665.5 50.1L665.2 51.4L662 53.5L658.8 56.3L656.3 57.3L653.5 57L652.9 59.5L648.3 60.9L647.2 63.9L644.2 64.7L644.3 68.2L640.1 69.2L638.4 72.2L639.1 75.4L639.7 77.2L639.5 80.4L641.3 81.9L643.1 84.7L645.2 85.4L646.9 87.3L648.4 91.1L649.5 94.3L652 94.2L655 96.7L656.9 96.7L658.9 98.3L662 99.2L663.5 101.2L665.9 101.9L669.4 104.6L671 104.9L672.6 105.8L670.6 108.4L669.8 109.1L668.8 111.6L666.7 114.8L665.1 115.1L661.8 118.8L658.8 118.5L660.8 122.3L662.3 125.7L661.8 128.9L662.3 130.3L663.2 132.7L663.4 135.6L664.3 138.9L666.1 140.3L665.6 142.3L667.3 145.2L668.8 148.4L670.7 149.8L670.3 152.6L672.8 154.3L672.5 157.9L672.5 159.1L675 163.3L674.2 164.4L675.6 168.8L675.7 172.5L676.3 173.9L674.8 176.5L676.1 180M392.9 180L392.7 177L391.6 173.2L392.6 171.4L391.6 169.4L392.1 164L391.3 162.9L393.7 161.6L395.6 159.6L400.4 159.2L402.6 157.1L404.9 157L406.9 157.8L410.3 159.3L413 158.3L414.5 158.3L418.8 158.7L419.8 159.4L423.5 161.7L426.1 162.8L427 161.9L431.2 163.9L433.3 165.1L434.2 166.1L436.4 168.9L440 168.6L442 169.9L443.6 170.8L447.6 170.6L449.9 169.3L452.1 167.5L456.5 169.2L457.6 168.9L461.5 167L462.6 171.2L463.9 173.7L464.8 174.7L467.6 176.8L468.7 180M509.9 180L511.6 179.5L514.3 177.7L515.9 174.6L518.8 175.1L523.1 175.8L524.7 175.7L527.3 176.8L529.6 176.4L531.5 178.8L534.8 177.7L537 178.2L539.8 178L543.5 179.2L545.8 180M800.1 10.7L801.8 10.4L804.4 8.3L809 7.1L810.6 10.3L814.2 9.8L815.8 12.6L818.5 14.6L820.7 12.8L824.2 9.1L826.7 7.1L829.2 4.7L831.5 2.9L832.2 0M789.3 40.2L789.5 42.2L790.7 44.8L791.9 47.2L791.5 51L791.4 54.3L793.9 55.9L796.5 56.8L798.2 58.1L799.8 62L802.3 63.4L804.8 64.5L808.6 65.6L811.6 65.9L812.2 69L812.2 72.9L813.2 74.8L815.3 78.4L815.8 81.3L811.6 81.6L809.1 84.4L808.5 85.4L810.6 87.2L814 87.1L817 88.4L819.2 88.9L820.5 90.7L824.8 90L825.7 88.1L828.7 88.3L831.7 88.6L833.7 88.3L837.9 87.8L841.1 88.6L843.5 89.5L845.4 92.2L847.9 92.1L851.8 95.8L853.4 93.6L857.9 94.7L858.8 93.4L862 94.5L863.9 96.9L867 96.7L868.6 99.5L870.4 102.7L871.8 102.5L876.2 105.2L878.9 107.7L881.1 108.7L883.5 108.4L884.6 109.7L888.3 109.9L891.6 110.9L893.2 112.7L895 116.7L895.9 118L899.3 116.1L899.8 113L900.2 111.1L902.7 108.5L904.1 106.2L907.8 106.9L909.2 105.2L912.6 105L916.4 104.1L916.8 107.5L918.4 108.7L920.9 111.3L923.3 112.5M851 95.1L851.8 98.8L851.4 101.6L853.2 104.1L854.3 108L851 108.8L850.1 110.7L847.7 113L846.4 116.3L845.5 116.9L843 120L841 121.3L838.1 123.1L838.3 127.1L833.8 129.2L837 131.5L835.7 133.9L837.4 135.8L835.5 136.7L834.2 139.7L831.2 141.8L829 141.4L825.7 142.4L822.9 145.4L822.4 145.5L818 147.7L817 149.8L812.6 150.8L815 153.4L814.3 154.6L816.3 157.6L815.8 160.9L814.5 163.9L812.8 164L812.3 167.8L811.6 170.2L810.5 173.1L808.1 174.2L806.5 176.6L806.8 180M915.3 104.5L917.3 100.7L919.3 98.3L920.5 97.7L921.2 93.1L923.7 91.4L926 88.7L927.9 88.8L929.4 85.5L929.4 83.5L931.3 80.4M717 171.5L719.7 170.2L721.9 169.2L725.5 169.1L728.8 166.3L729.9 166L732.7 167.3L733.9 168.3L736.4 170.8L740.2 173.6L742.1 175.4L743.7 177.4L743.8 180M928.7 57.6L932.2 55.1L934.5 55.2L936.2 53.8L940.6 52.2L942.4 52.8L944.3 55.4L946.2 54.7L950.6 56.4L951.7 58L954.7 59.2L957 60.4L959.7 61.4L960.7 62.1L965 64.4L965.2 66.6L962.9 64.3L960.9 64.5L958.1 65L954.8 64.8L951.8 64.3L950.3 62.8L947.2 62.3L944.6 64L942.2 63.1L940.1 61.2L938 61.6L933 60.7L931.1 57.9L928.7 57.6M545.8 180L548.8 182.3L550.2 183.3L552.1 185.2L552.5 188.2L553.8 190.9L553.8 192.8L554.5 195.8L554.4 198.9L553.8 201.4L553.3 204.9L550.8 207.2L550.7 209.9L554.2 211.7L555.4 212.1L559.7 215.2L562.3 214.4L564.7 216.2L566 220.3L566.4 222.9L569.4 223.4L569.7 226.2L572.9 228.8L572.5 229.7L574 234L574 236L574 239L574 240.2L575.1 243.9L574.4 247.3L574.9 247.9L575.3 250.2L577.7 254.1L580.5 253.9L580.8 257.9L580.1 259L577.6 260.6L576.6 263.5L574.7 266.3L570.6 267.7L569 271.4L567.8 271.1L564.7 273.8L563.4 276.3L561.1 277.6L558 280.1L556.7 280.5L555 285L553.1 285.4L553.9 288.4L552.1 291.7L551.3 294.5L551.2 298.2L551.4 298.4L549.3 303L549.1 305.7L547.4 308L549.2 308.4L552.7 311.2L555.6 312.1L556.3 313.6L559.9 314.3L562.1 315.2L561.5 318L559.8 320.5L560.1 324.8L560.2 325.9L559.2 328.2L559.1 330.6L557.8 335.2L559.6 336.7L560.6 339L560.2 341.1L561.2 344.3L563 347.6L564.2 349.7L564.4 353.7L562.4 355.9L563.7 360.1M564.4 217.2L566.4 215.8L567.6 212.6L569.5 210.2L571.2 207.6L576.1 205.5L577 203.2L579.5 202.3L583.5 200.5L585.4 200L588.6 201.3L591.4 199L594.2 200.5L596.6 197.8L599.8 199.3L601.2 196.9L603.5 197.5L607.9 197.3L610.7 195.7L611.8 196.6L615.3 194.9L618 193.9L619.1 193.3L621.7 193.1L625.1 191.9L628.5 190.7L630.8 189.5L634.6 190.4L637.4 188.4L639.1 189.6L641 187.4L643.3 186.9L647.5 186.2L650.3 186.4L652.2 186.4L654.9 186.1L657.7 184.7L660.7 184L663.3 184.8L666.1 183.2L668.8 184.4L670.6 182.1L673.5 182.5L676.1 180M468.7 180L469.8 180.9L472.9 184.7L475.8 186L478.5 187.8L480 189.6L480.7 188.4L483.5 188L487.4 185.8L491.1 185L491.7 183.1L495.9 183.8L497.3 180.9L501.8 180.9L505.3 181.1L507.3 180.1L509.9 180M513.9 180L515.2 182.6L514.5 186.4L514.4 188.6L514.9 191L516.3 194.2L518 192.4L521.6 192.3L525.7 190.4L526.4 188.4L529.2 187.8L531.8 186.1L535.8 186.1L537.3 185.8L539.7 183.6L542.2 183.2L546.7 180.5L548.4 180M378.3 180L381.6 182.8L383 183.6L386.7 183.7L388.9 181.8L392.9 180M702.6 180L705.6 182.5L708.2 186.3L710.2 186.3L713.6 186L717 185.3M717 333.5L715.1 333.9L712.2 337.2L707.9 335.9L704.5 339.5L701.4 340.6L701.1 342.7L700.3 343.8L701.1 346.2L699.6 350.9L699.9 353.4L699.9 353.7L697.3 358.3L697.3 360.1M743.8 180L746.3 180.8L747.8 183.3L749.6 185L750.6 189.3L754 189.6L756.2 189.1L758.9 189.5L761.7 190.7L764.3 191.3L767.9 190.2L770.2 191.8L774.4 191.9L775.2 194.1L779.6 194L780.7 193.9L783.4 195L785.1 194.5L788.3 193L790.5 190L793.6 190.1L795.5 188.2L798.1 187.7L800.9 185.4L801.9 182.8L804.3 182.9L806.8 180M778.6 193.4L777.6 195.8L776.9 197.8L777.6 200.1L775.8 205.2L774.2 207.1L773.7 208.8L772.5 211.2L775.7 215.2L777.4 215.6L778.4 218.6L779.8 221.5L780.4 224.9L781.2 226.6L784.9 228.3L785.6 232.2L786 233.9L788.6 236L789.9 238.7L790.8 241.9L792.5 243.8L792.8 247.1L792.2 250L792.8 253.4L793.7 255.6L794.3 257.6L794 259.5L798.5 260.8L800.1 261.1L803.6 260.7L804.6 262.6L807.1 264.3L809.8 267.2L811.7 267.2L810.5 272L811.6 272.8L809.9 275.8L809.7 278.8L811.6 281.9L811.3 283.4L811.7 288.5L813.1 289.7L813.1 293.3L814.4 294.3L814.8 297.5L815 299.9L815.2 302.8L815.8 304.7L818 306.6L820.3 306L824.7 306.7L826.4 307L830.4 307.1L832.6 309.5L833.7 306.9L837.6 305.9L838.8 302.8L841.2 302.1L844.2 300.4L845.8 299.8L849.1 297.5L850 300.1L853.4 301.1L855.5 304.5L856 306.4L857 307.2L859.1 310.4L859.6 313.2L861.7 316.2L860.5 318.2L864.3 316.8L867.9 315.5L869.7 315.7L872.2 313.5L875.1 313.2L878.2 311.9L880.2 310.1L883.6 311.4L886.5 312L887.5 310.6L888.3 314.8L889.2 315.6L891.8 319.5L890.9 322.5L893.5 324.6L893.8 327.4M794.7 260.4L792.2 263.1L791.8 265.1L792 267.9L790.3 268.4L787.6 271.6L785.4 275L783.4 274.2L780.8 275.2L779.6 276.9L776 277.6L772.1 278.3L771.5 280.6L768.8 280.2L764.5 280.7L762.6 282.8L759.8 284.5L757.4 285.5L755.3 286.4L752.9 286L748 284L746.6 282.9L744 281.4L740.5 283.9L737.9 285L736.5 286.1L733 288.3L732.9 290.8L731.9 292.4L733.4 294L731.3 294.8L728 295.7L726.1 297.4L723.1 297.9L723.2 301L722.6 302.5L724.4 305L725 307.8L723.2 310.2L725.4 315.1L724.8 317.1L725.3 320.4L727.3 321.1L726.6 325.2L724.4 327.3L722.9 327.5L721.5 329.5L719.3 330.8L717 333.5M563.7 360.1L567.7 359.7L570.4 359.2L573.1 361.4L571.2 361.6L570.3 365.9L569 368.3L567.8 370.7L568.5 373.3L567.5 375.1L570.6 376.5L573.5 380.1L576.2 380.2L577.1 381.1L576.7 384.1L575.6 385.7L572.9 390.4L571.6 392.2L568.6 393.8L568 398.4L568.5 399.3L567.6 401.5L565.7 406.6L564 409.2L565.3 409.5L565 413.2L565.3 416.6L565.7 419.4L567 421.3M357 386.8L359.1 384.6L362.5 383.7L365.1 384.5L367.9 382.7L368.6 384.4L371 386.3L373.3 387.6L376.1 388.7L379.1 389.7L380.1 393.2L382.4 390.7L385.7 387.5L385.7 384.2L389.5 382L390.4 380.8L391.3 378.3L393.3 376.2L396.9 375L398.8 374.4L401.4 372.9L404.2 374.1L407.5 373.3L408.9 372.7L412.8 371.6L415.7 372.4L417.4 373.7L419.9 373.6L422.3 375.1L426.2 376L429.8 376.6L431.7 378.1L431.3 382.2L431.1 383L429.5 387L430.9 388.2L429.5 392.6L429.6 394.3L432.3 396L435.2 396.1L437.9 398.5L439.2 399L437.4 403.3L437.2 404.5L435 407.1L433.3 410L432.3 414.6L433.3 416.8L431.1 418.7L431.1 422.4L430.2 424.3L428 427L427.7 429.6L423.7 431.6L422.4 432.4L422 436L419.5 436.8L417.7 441.1L417.5 443.2L417 446L416.1 447.7L416.3 451.3L418.6 447.9L420.9 446.4L423 443.2L425.2 442.8L425.5 440.8L428.1 439.8L431.3 440.6L434.1 443L437.2 443.1L436.8 446L438.2 448.4L438.9 451.4L437.8 452.2L438.8 456.8L438.3 458.8L440 462L438.1 463.8L440.8 463.7L445.6 465.4L447.7 466.4L449.6 464.9L452.3 465.7L455.7 463.3L457 462.4L461.2 461.9L463.8 462L463.3 464.3L463.9 467.4L465.2 468.6L468.1 471.5L467.1 475.5L469 478.2L468.4 480.4L469.9 483.7L468.7 487M463.4 461.2L467.3 459.1L469.5 457.7L471.4 455.9L473.1 457L474.2 454L474.1 450.2L474.1 448.1L476.4 445.3L475.6 443.7L477.3 440.4L475.5 437.6L479.2 438.9L481.6 438.5L485 438.1L487.3 439.3L491 439.2L492.2 440.8L494.1 440.8L498.4 441.4L500.4 443.3L504.3 444.5L506.5 444L506.3 447L508.8 451.6L507.6 453.5L511.4 450.7L513.6 451.2L516.9 448.7L519.9 447.4L519 445.1L519.9 443L519.2 440.4L517.8 438.5L518.4 435.1L515.3 431.1L514.1 430.2L516.8 427.1L517.4 425.8L521.5 423.1L523.4 421.4L524.5 419.3L526.6 418.4L531 421.2L531.7 420.8L536.3 421.9L537.3 423.8L539.4 424.7L542.8 426.3L547 426.5L547.7 428.6L551 428.9L554.1 429.1L555.9 428L559.7 429.2L561.2 427.8L563.7 424.7L564.7 424.4L567.1 420.8L568.7 423.4L570.4 425.5L571.9 429.5L572 433.1L574.4 430.5L576.6 430.6L581 430.1L582.8 429.7L584.6 427.7L588.7 428.6L591.3 427.1L594.3 425.5L597.4 425.5L598.5 423.7L601.4 426.3L601.5 430.3L604 432L606 435.7L603.3 436.9L601.8 439.7L601.6 443.5L599.9 444.4L597.1 446L594.6 448.3L593.9 449.9L590.1 451L591 453.2L590.7 456.9L589.6 459.4L588.7 462.2L584.7 463.1L583.5 464.2L579.8 464.1L577.9 467.4L579.7 467.4L582.3 468.7L586.1 472.5L589.1 472.5L591.5 473.4L594.5 473.2L595 473.1L598 471.3L600.5 470.8L604.4 470.9L605.7 470L608.6 467.6L612.6 467L614.5 466.7L616.8 466.4L619.5 465.6L623.7 464L624.3 463.9L627 462.6L630.7 460.7L633.9 461.8L636.4 460.3L638.9 460.1L640.8 462.2L645.4 463.3L648 463.4L650.7 464.1L652.1 465.6L654.7 468.8L658 470L659.7 471L660.2 468.6L660 467.1L661.1 463.7L660.6 461.7L661 457.9L662.3 456.4L663.7 453.9L663.9 451.7L663.6 448.5L662.2 444.5L662.3 443.5L664.4 440.3L663.5 436.9L663.5 435L665.9 431.5L663.7 428.5L664.8 427.7L666.2 423.9L665.6 420.6L666.9 420L668.9 418.2L671.2 415.3L671.3 413L671.5 408.8L673.9 407.5L674.1 404.4L674.8 403.8L678.3 401.5L680.6 397.9L681.6 395.4L683.5 394.3L683.4 389.8L685.3 389L687.4 385.2L690.2 384.8L690.6 380.3L693 378.9L692.2 375.7L695 374.5L696 371.2L696.6 367.5L698.4 365.2L696.3 363L697.3 360.1M662.8 450.6L664.4 450.4L668 452L671.1 452.9L673.2 451.8L676.6 452.4L678.6 453.9L681.8 455.3L683.4 455.7L687.2 455.8L687.9 459.1L691.2 459L692.4 463.5L694.5 464.1L698.1 467.4L700.3 467.2L701.4 465.5L706.5 467.3L706.8 465.4L709.9 467.6L711 469.6L713.9 472.2L714.9 473.9L714 475.9L716.6 478.8L717 482.5M89 0L92.5 1.9L92.7 3.6L94.8 4.2L96.9 6.3L101.2 8L101.6 7.7L105.9 7.4L108.5 6.7L111.5 7L113 4.9L117 5.4L119.4 4.5L123 4.3L126 5.4L127.9 2.7L131.1 2L133.3 0.8L137.5 1L138.7 -1.1L142.5 1.8L145.6 0.8L147.4 2.8M166.9 0L169.3 0.2L173.2 0.5L175.5 3.3L178.7 1.5L179.7 2.5L184.1 4.4L186.4 4.8L188.9 5.9L192.3 6.4L195.3 5.8L198.6 5.6L200.9 3.2L203.5 5.1L205.7 4.9L207.8 4.8L211.3 3.9L213.6 2.5L216.6 2.3L216.9 5.4L220.1 8.7L219.8 11.1M278.2 44.5L280.2 48L280.9 51.4L281.6 52.3L282.5 54L284.2 54.9L288.6 58.1L289.4 59.1L292.8 60.8L292.9 63.4L292.1 66.8M306 43.1L307.4 45.4L310.5 46.2L313.1 47.4L317.1 47.8L318.4 50.5L320.9 52.6L323.1 53.9L326.3 55.5L327.2 54.9L329.1 60.2L329.8 62L334.4 63.7L335.8 62L339.9 62.5L342.8 62.5L344.3 61L346.5 61.9L349.8 60.6L351.3 58.8L349.8 56L349.4 53.4L348.1 48.9L347.1 46L347.4 43.6L346.5 41.7L348.5 39.4L346.4 36.9L346 32.3L346.1 30.4L346.8 27.7L346.7 24L347 21.8L346.5 18.3L346.3 16L346.1 14.7L345.4 10.5L346.5 10.2L351.6 9.9L353.7 10.9L356.5 9.7L357.9 9.3L362.9 9.9L364.8 10.2L366.5 8.8L368.7 10.7L370.4 7.5L372.4 3.4L375.4 4.9L380 5.6M49.8 351.7L50.9 353.4L53.4 354.8L54.4 358.6L56.2 359.6L59.3 361.2L60.4 360.4L63.5 359.9L66.8 359.3L70.1 357.3L72.2 358.4L73.7 355.5L76.9 354.8L79.5 355.5L81.2 353.1L84.9 352.3L85.7 355.3L86.9 356.7L89 360L91.9 362.5L91.1 364L94.3 367.1L96.1 370.5L94.8 370.8L93.8 374.5L90.6 376.1L91 378.8L87.7 381.5L88.6 384.6L86.8 386.1L84.8 389.3L83.2 392.8L82.7 393.9L83.4 397.4L80.4 398.8L80.7 402.6L78.2 405.1L79.1 407.8L76.9 410.3L79.9 413L80.8 415.8L84.9 417.9L86.7 419.3L88.9 421.2L89.2 423.9L93.1 424.3L93.4 425.8L96.1 427.7L97.5 431L100.6 433.2L102.2 434.2L100.4 437.4L100.1 438.7L100 442.4L99.1 445L98.6 445.5L98.3 448L97.9 451.2L94.5 454.9L93.2 455.9L91.8 459L89.5 460.7L88.4 464.3L86.5 466.2L90.1 466.3L93.9 467.4L95.7 466.7L97.7 466.7L99.8 462.6L102.8 461.9L105.8 458.6L106.2 457L109.2 455.8L110.7 455.1L113.5 453.1L116.3 449.6L118.3 448.1L118.9 449.9L122 448.1L125.4 449.3L129.5 452.2L130.4 452.8L133.8 455L135.7 455.7L136.6 456.5L140.7 458.2L143.7 459.9L146.7 459L147.1 461.7L151 460.7L153.9 461.8L155.4 462.9L158.8 464.6L160.2 465.7L164.3 465.8L165.9 464.5L165.6 461.5L168.8 459.9L170.2 456.3L172.5 455.7L172.1 452.6L175.4 449.8L175.5 449.5L179.4 446.9L181.6 446.4L184.1 446.6L185.4 444.4L188.3 443.7L190.5 442.6L194.1 442.5L195.9 442.2L200.8 441.4L201.9 440.9L204.8 438.7L206.1 436L207.8 434L208.2 433.7L210.4 431.1L211.2 428.2L212.5 426.7L212.4 423.9L213.8 420.2L216.4 418.7L217.6 417.1L219.9 415.8L221.3 417.2L226.1 417L226.6 418.1L229 421.8L230.8 422.4L233.6 425.5L237 425.9L236.2 430.4L239.9 430.6L239.7 433.8L242.1 434.5L244.9 435L246.3 435.6L249 436.5L252.6 439.1L254.1 440.3L257.5 437.6L259 435.6L262.3 434.9L262.1 432.3L265.9 431.3L268.1 429.3L270.4 429.2L270.7 427L273.1 425.7L276.8 424.3L277.5 420.9L281.5 422.6L283.1 422.2L287.2 422.4L290.2 423.3L292.2 424.2L295.8 425.5L296.2 423.4L298.4 420.2L301.1 419.1L302.7 417.6L303.4 414L306.2 411.7L306.6 409.6L310.6 410.2L312.9 409.5L315.6 406.9L316.7 406.9L318.5 405.7L321 403.2L324.3 401.7L327.6 401.7L328.6 398.1L329.9 397.1L333.1 394.9L335.8 393.5L338.2 390.6L338.6 389.5L338.5 386.6L337.9 383.9L335.9 382L335.8 380.2L333.9 376.8L334.2 375.5L332.3 370.8L330.8 369.6L331.2 365.6L333.8 365.3L332.4 361.7L334.5 358.7L334 357.4L336.6 354.1L336.7 351.7M339.7 389.8L341 390.5L343.5 392.9L345.8 392.2L350.1 392.7L350.9 393.5L353.4 395.7L356.9 392.4L357 391.6L359.4 388.2L360.4 385.6L364.3 382.9L365 385.8L369.1 387.5L370.6 388.9L373.4 388.4L375.6 390.8L378.8 390.5L379.9 393.9L381.8 391.9L384.5 388.8L386.5 387.7L390.5 385.3L392.3 384.1L392.7 383.6L395.3 380.5L397.6 380.5L400 378.1M87.8 465.9L89.5 469L88 472.5L90.3 475.7L92 477.2L94.6 478.9L96 478.1L99.2 478.5L102.2 478.3L104.7 480.8L108.1 480.5L112.3 481.2L113 482.9L116.7 484.4L118.9 485.1L121.5 485.1L123 487M0 375.1L2.7 373.1L5.6 370.7L7.1 369.4L10.2 367.7L12.6 367.3L12.7 362.5L12.9 361.1L12.2 358L10.5 355.6L11.8 351.6L11.7 348.8" fill="none" stroke="#8b8e91" stroke-width="1.2" stroke-linejoin="round"/>
<path d="M915.3 0L916.3 3.9L918.5 7.4L918.8 9.8L920.2 12.7L923 15.2L926.5 18.3L927.9 20.7L931.8 23.6L934.6 26.6L938.6 30.3L941.1 32.4L945.5 34.8L948.8 37.9L951.1 40.9L954.9 42.2L958.3 46.1L960.5 48.9L962.7 52.9L965.5 55.1L967.3 58.7L969.7 63.3L969.5 67.7L965.3 67.1L962 67.4L958 66.3L953.7 66.5L949.7 64.6L944.2 64.2L941.7 63.4L938.3 65L933.9 64.1L931.7 68.3L934.8 68.5L939.1 70.6L942.2 71.5L946.1 72.9L948.8 74.6L953.7 75.1L956.7 77.8L960.2 81.8L961.7 85.5L962.8 88.7L964.3 90.2L965.7 95.4L967.3 99.1L967.5 102.6L966.3 105.2L965.1 110.4L961.6 112.3L958.2 113.9L955.3 116.6L951.8 117.2L947.4 118.9L945.1 121L940.9 121.5L938.1 122.7L934.9 125.3L930.8 126.1L928.2 128.2L924.6 129.9L920.2 131.9L918.3 132.7L915.2 135.7L910.5 137.2L909.1 142.3L905.3 146L910.2 150.9L913.6 148.9L917.5 146.3L920.9 145.8L925.3 144.7L928.1 143.6L931.5 144.5L935.5 145.9L938.8 146.8L942.4 150.5L945.6 153.3L948.7 154.9L953.6 156.8L957.5 158.7L963.2 159.9L967.3 158.4L972.7 161.8L975.1 167.3L970.4 173.5L969.8 175.5L969 180.5L968.2 184.3L969.3 187.9L968.6 191.7L969 196.4L969.6 200.6L968.8 203.3L970.3 207.9L970.1 211.4L969.9 215.6L966.3 212.9L961.6 210.6L958.9 210L956 212.5L955.4 216.2L953.9 220.2L952.5 222.9L954.4 226.7L954.5 229.7L955.3 233.8L954.2 236.7L951.7 240.5L949.9 245L951.1 248.4L951.6 253.8L952.2 258L948.4 258.9L944.8 261.8L941.4 262.6L937.7 264.4L935.3 267L932.1 269.2L928.8 273.2L925.3 277.2L922.3 277.7L919.3 280.7L915.1 281.1L914.2 285.8L911.9 289.8L909.1 291.7L907.2 295L906.3 299.5L903.2 302L901.3 306.1L900.8 310.1L898.9 313.5L897.7 315.8L896.1 318.8L894.7 323.6L891.5 325.4L887.2 326.7L884.2 329.1L883 333.4L883.4 337.2L879 341.3L875.2 343.4L871.3 345L865.9 345.9L862.5 348.1L858.4 349.6L853 350.9L852.8 356.1L851.4 360.6L854.8 364.4L855.4 369.2L858.9 372.9L861.8 377.1L858.8 380.2L857.1 382.8L853.9 384.4L852.1 388.3L851.7 393.3L854.2 396L857.2 398.4L852 401.2L847.9 403.7L846.8 407.7L846.5 410.2L846.4 413.4L850.8 415.5L853.9 416.4L859.1 417.6L856.5 419.4L854.4 421.5L851.5 424.2L846.5 424.9L843.6 426.1L839.3 426.5L835.3 427.8L830.6 429.3L828.1 430.6L824.5 432.5L822.2 437.3L821.4 441L818.7 443.8L816.7 448.1L813.4 452.3L809.7 455.2L806.3 456.4L803.2 459.1L801.7 462.9L800.9 467.8L796.5 468.4L792.3 470.2L788 471.9L784 472.2L780.6 473.8L779.3 475L775.9 478.4L773.7 481.6L770.6 487.1L770.6 492L1088 492L1088 -5L915.3 -5Z" fill="#bedaf2"/>
<path d="M931.3 58.4L933.9 57.2L936.4 54.8L939.7 53.2L942.4 54.8L945.9 55.7L949.9 57.2L953.1 58.2L956.2 59.8L959.2 61.9L962.3 63.7L965 65.1L962.2 64.7L958.4 64.9L956.1 64.3L953 63.5L949.4 63.6L946.5 63.1L942.4 62.3L939.4 61.5L935 59.7Z" fill="#fdf9f1" stroke="#9aa3ab" stroke-width="0.7"/>
<path d="M977.4 161a2.6 2.1 0 1 0 5.2 0a2.6 2.1 0 1 0 -5.2 0M984.4 154a1.6 1.3 0 1 0 3.2 0a1.6 1.3 0 1 0 -3.2 0M974.5 151a1.5 1.2 0 1 0 3 0a1.5 1.2 0 1 0 -3 0M987.6 167a1.4 1.1 0 1 0 2.8 0a1.4 1.1 0 1 0 -2.8 0M981.8 147a1.2 1 0 1 0 2.4 0a1.2 1 0 1 0 -2.4 0M972.7 176a1.3 1 0 1 0 2.6 0a1.3 1 0 1 0 -2.6 0M964.5 205a1.5 1.2 0 1 0 3 0a1.5 1.2 0 1 0 -3 0M967.8 215a1.2 1 0 1 0 2.4 0a1.2 1 0 1 0 -2.4 0M953.6 258a1.4 1.1 0 1 0 2.8 0a1.4 1.1 0 1 0 -2.8 0M933.7 272a1.3 1 0 1 0 2.6 0a1.3 1 0 1 0 -2.6 0M856.4 400a1.6 1.3 0 1 0 3.2 0a1.6 1.3 0 1 0 -3.2 0M857.8 416a2.2 1.8 0 1 0 4.4 0a2.2 1.8 0 1 0 -4.4 0M848.7 370a1.3 1 0 1 0 2.6 0a1.3 1 0 1 0 -2.6 0M832.6 432a1.4 1.1 0 1 0 2.8 0a1.4 1.1 0 1 0 -2.8 0M865.8 358a1.2 1 0 1 0 2.4 0a1.2 1 0 1 0 -2.4 0M875.8 346a1.2 1 0 1 0 2.4 0a1.2 1 0 1 0 -2.4 0" fill="#fdf9f1"/>
<path d="M903.2 489.2L904.5 486L905.6 482.6L907.3 479.9L908.7 475.9L910.4 473L912.1 471L912.7 467.9L915.3 464.9L916.4 462.2L917.4 459.4L919.5 456.8L922.1 454.4L924.5 451.9L925.8 449.5L928.8 447L931.8 445.2L933.9 443.1L936.5 441.5L940 439.7L943.3 436.8L947.5 435.3L951.5 436.5L955.9 438.5L959.7 440.1L964.1 441.2L966.4 442.2L968.3 444.5L972.1 446.1L969.8 448.4L967.9 452.2L966.3 454.8L965.3 457.4L965.1 461.5L964.7 464.9L964.6 468.2L964.4 471.1L964.5 474.8L963.7 478L962.6 482.6L960.4 485.9L959.2 488.8L956.2 489.4L953.8 489.8L950.7 489.3L947.2 488.8L944.1 489.3L940.6 489.7L937.3 488.8L934.1 488.8L931.5 489.6L927.8 489.2L925.2 489.3L921.9 489.2L918.3 488.7L915.6 488.9L912.9 488.9L909.9 488.9L905.9 489.2Z" fill="#fdf9f1"/>
<path d="M942.5 444.3L940.5 451.8M949.8 445.6L959.3 443.4M949.8 445.6L955.5 453.1M959.3 443.4L964.7 454.1M930.1 450.4L940.5 451.8M930.1 450.4L928.5 459.4M940.5 451.8L934.4 459.5M945.7 454.1L955.5 453.1M945.7 454.1L945.7 459.8M955.5 453.1L964.7 454.1M964.7 454.1L961.4 458.9M928.5 459.4L934.4 459.5M934.4 459.5L929.1 466.5M945.7 459.8L951.9 460.3M945.7 459.8L940.8 464.2M945.7 459.8L945.8 468.2M951.9 460.3L961.4 458.9M951.9 460.3L945.8 468.2M951.9 460.3L958.7 464.4M923 467.3L915.6 474M923 467.3L924.8 473.3M929.1 466.5L940.8 464.2M929.1 466.5L924.8 473.3M929.1 466.5L936.3 474.3M940.8 464.2L936.3 474.3M945.8 468.2L936.3 474.3M945.8 468.2L945.7 476.1M945.8 468.2L952.9 476.2M924.8 473.3L936.3 474.3M924.8 473.3L924.9 484.1M924.8 473.3L930.3 483.6M936.3 474.3L930.3 483.6M936.3 474.3L942.3 479.5M945.7 476.1L942.3 479.5M945.7 476.1L949.4 482.9M952.9 476.2L958.9 474.1M930.3 483.6L942.3 479.5M942.3 479.5L949.4 482.9M949.4 482.9L956.2 480.4" fill="none" stroke="#f6c988" stroke-width="0.9" stroke-linecap="round"/>
<path d="M947.4 446.3C945.6 446.3 940.3 444.5 936.7 446.3C933.1 448.1 929.1 453 926 457C922.9 461.1 920.6 465.4 918 470.4C915.3 475.4 911.3 484.3 909.9 487.1M947.4 446.3C947.9 448.6 950.6 455.7 950.1 459.7C949.7 463.7 946.1 465.9 944.7 470.4C943.4 475 942.5 484.3 942.1 487.1M947.4 446.3C949.7 446.8 959 446.3 960.8 449C962.6 451.7 959 458.4 958.1 462.4C957.2 466.4 955.9 471.3 955.5 473.1M926 457C926.9 458.8 930.9 462.8 931.3 467.8C931.8 472.8 929.1 483.8 928.7 487.1M939.4 441C941.6 440.7 948.8 439 952.8 439.6C956.8 440.3 961.7 444.1 963.5 445M959.5 80.4C961 84.8 966 99.1 968.9 107.2C971.8 115.2 975.6 125 976.9 128.6" fill="none" stroke="#fdeed6" stroke-width="2.6" stroke-linecap="round"/>
<path d="M947.4 446.3C945.6 446.3 940.3 444.5 936.7 446.3C933.1 448.1 929.1 453 926 457C922.9 461.1 920.6 465.4 918 470.4C915.3 475.4 911.3 484.3 909.9 487.1M947.4 446.3C947.9 448.6 950.6 455.7 950.1 459.7C949.7 463.7 946.1 465.9 944.7 470.4C943.4 475 942.5 484.3 942.1 487.1M947.4 446.3C949.7 446.8 959 446.3 960.8 449C962.6 451.7 959 458.4 958.1 462.4C957.2 466.4 955.9 471.3 955.5 473.1M926 457C926.9 458.8 930.9 462.8 931.3 467.8C931.8 472.8 929.1 483.8 928.7 487.1M939.4 441C941.6 440.7 948.8 439 952.8 439.6C956.8 440.3 961.7 444.1 963.5 445M959.5 80.4C961 84.8 966 99.1 968.9 107.2C971.8 115.2 975.6 125 976.9 128.6" fill="none" stroke="#f3bb6e" stroke-width="1.25" stroke-linecap="round"/>
<path d="M1013 469L1007 487" stroke="#9aa4a8" stroke-width="3" opacity=".8"/>
<ellipse cx="1022" cy="477" rx="4" ry="2" fill="#fff"/>
<path d="M1057 486q10 -9 22 -5l8 12h-34z" fill="#fefcf8"/>
<rect x="729.5" y="49.4" width="9.8" height="9.4" rx="2.8" fill="#de1620"/><rect x="731.3" y="51.2" width="6.2" height="5.8" rx="1.5" fill="none" stroke="#ffd9dc" stroke-width="0.9"/>
<rect x="803.7" y="38.2" width="9.8" height="9.4" rx="2.8" fill="#de1620"/><rect x="805.5" y="40" width="6.2" height="5.8" rx="1.5" fill="none" stroke="#ffd9dc" stroke-width="0.9"/>
<rect x="940.4" y="87" width="9.8" height="9.4" rx="2.8" fill="#de1620"/><rect x="942.2" y="88.8" width="6.2" height="5.8" rx="1.5" fill="none" stroke="#ffd9dc" stroke-width="0.9"/>
<rect x="873.7" y="142.1" width="9.8" height="9.4" rx="2.8" fill="#de1620"/><rect x="875.5" y="143.9" width="6.2" height="5.8" rx="1.5" fill="none" stroke="#ffd9dc" stroke-width="0.9"/>
<rect x="578.1" y="125.1" width="9.8" height="9.4" rx="2.8" fill="#de1620"/><rect x="579.9" y="126.9" width="6.2" height="5.8" rx="1.5" fill="none" stroke="#ffd9dc" stroke-width="0.9"/>
<rect x="511.6" y="263" width="9.8" height="9.4" rx="2.8" fill="#de1620"/><rect x="513.4" y="264.8" width="6.2" height="5.8" rx="1.5" fill="none" stroke="#ffd9dc" stroke-width="0.9"/>
<rect x="657.9" y="235.9" width="9.8" height="9.4" rx="2.8" fill="#de1620"/><rect x="659.7" y="237.7" width="6.2" height="5.8" rx="1.5" fill="none" stroke="#ffd9dc" stroke-width="0.9"/>
<rect x="831.3" y="382.7" width="9.8" height="9.4" rx="2.8" fill="#de1620"/><rect x="833.1" y="384.5" width="6.2" height="5.8" rx="1.5" fill="none" stroke="#ffd9dc" stroke-width="0.9"/>
<rect x="942.5" y="441.1" width="9.8" height="9.4" rx="2.8" fill="#de1620"/><rect x="944.3" y="442.9" width="6.2" height="5.8" rx="1.5" fill="none" stroke="#ffd9dc" stroke-width="0.9"/>
<rect x="194.2" y="355.8" width="9.8" height="9.4" rx="2.8" fill="#de1620"/><rect x="196" y="357.6" width="6.2" height="5.8" rx="1.5" fill="none" stroke="#ffd9dc" stroke-width="0.9"/>
<rect x="-6.9" y="440.3" width="9.8" height="9.4" rx="2.8" fill="#de1620"/><rect x="-5.1" y="442.1" width="6.2" height="5.8" rx="1.5" fill="none" stroke="#ffd9dc" stroke-width="0.9"/>
<g font-family="'Liberation Sans',sans-serif" font-size="13" fill="#484848" stroke="#fdfaf4" stroke-width="2.4" paint-order="stroke" stroke-linejoin="round">
<text x="719.7" y="41.5" textLength="30" lengthAdjust="spacingAndGlyphs">Hefei</text>
<text x="786" y="31.6" textLength="45.6" lengthAdjust="spacingAndGlyphs">Nanjing</text>
<text x="919.4" y="79" textLength="51.8" lengthAdjust="spacingAndGlyphs">Shanghai</text>
<text x="849.6" y="135.3" textLength="59" lengthAdjust="spacingAndGlyphs">Hangzhou</text>
<text x="562.3" y="117" textLength="42" lengthAdjust="spacingAndGlyphs">Wuhan</text>
<text x="487.8" y="255.8" textLength="56.6" lengthAdjust="spacingAndGlyphs">Changsha</text>
<text x="633.5" y="228.4" textLength="59.8" lengthAdjust="spacingAndGlyphs">Nanchang</text>
<text x="814.8" y="375.3" textLength="42.9" lengthAdjust="spacingAndGlyphs">Fuzhou</text>
<text x="930.6" y="432.4" textLength="33" lengthAdjust="spacingAndGlyphs">Taipei</text>
<text x="176" y="347.3">Guiyang</text>
<text x="-27" y="432.7">Kunming</text>
</g>
<g font-family="'Liberation Sans',sans-serif">
<text x="934" y="115.7" font-size="14" fill="#748da5">East China Sea</text>
<text x="818.8" y="479.8" font-size="14.5" fill="#5f86a6">Taiwan Strait</text>
<text x="994.3" y="403.5" font-size="10.5" fill="#666" stroke="#e8f1fa" stroke-width="2" paint-order="stroke">Tiaoyu Tao</text>
<text x="1048" y="393.3" font-size="11" fill="#666" stroke="#e8f1fa" stroke-width="2" paint-order="stroke">Chihwei Yu</text>
</g>
<circle cx="638.3" cy="148.2" r="26.6" fill="#40c6a2" stroke="#39b290" stroke-width="1.6"/>
<circle cx="638.3" cy="134.2" r="3.05" fill="none" stroke="#dff5ee" stroke-width="1.8"/>
<circle cx="632.3" cy="139.8" r="3.05" fill="none" stroke="#dff5ee" stroke-width="1.8"/>
<circle cx="644.3" cy="139.8" r="3.05" fill="none" stroke="#dff5ee" stroke-width="1.8"/>
<circle cx="638.3" cy="145.6" r="3.05" fill="none" stroke="#dff5ee" stroke-width="1.8"/>
<text x="638.5" y="163.7" font-family="'Liberation Sans',sans-serif" font-size="14" fill="#fff" text-anchor="middle">2</text>
</svg>
<!-- MAPSVG_END -->

<!-- search -->
<div class="card" style="left:12px;top:12px;width:333px;height:31px;box-shadow:0 2px 4px rgba(0,0,0,.3)"></div>
<div class="t" style="left:28px;top:18.5px;font-size:17px;color:#a2a2a2;letter-spacing:0.05px">Enter the location name</div>
<!-- status filter -->
<div class="card" style="left:367px;top:12px;width:111px;height:31px;box-shadow:0 2px 4px rgba(0,0,0,.3)"></div>
<svg style="left:377px;top:18px" width="20" height="22" viewBox="660 208 20 22">
<path d="M662.4 211.2 H677.4 L671.6 218.4 V223.2 L668.2 225.8 V218.4 Z" fill="none" stroke="#3b8cff" stroke-width="1.9" stroke-linejoin="round"/>
</svg>
<div class="t" style="left:405px;top:21px;font-size:13px;color:#505050">Status</div>
<svg style="left:457px;top:25px" width="9" height="6" viewBox="0 0 9 6"><path d="M0.4 0.6 H7.8 L4.1 5 Z" fill="#8a8a8a"/></svg>
<!-- refresh -->
<div class="card" style="left:500px;top:12px;width:34px;height:31px;box-shadow:0 2px 4px rgba(0,0,0,.3)"></div>
<svg style="left:505px;top:16px" width="26" height="26" viewBox="788 206 26 26">
<path d="M806.6 213.2 A7.8 7.8 0 1 0 808.4 219.6" fill="none" stroke="#3b8cff" stroke-width="2.2"/>
<path d="M809.4 209.4 V216.4 H802.6 Z" fill="#3b8cff"/>
</svg>
<!-- device card -->
<div class="card" style="left:12px;top:67px;width:350px;height:282px;box-shadow:0 1.5px 5px rgba(0,0,0,.4)">
  <div class="t" style="left:0;width:350px;text-align:center;top:18px;font-size:15px;font-weight:bold;color:#333;letter-spacing:0.2px">Device Status</div>
  <svg style="left:0;top:0" width="350" height="281" viewBox="295 257 350 281">
    <circle cx="381" cy="383.6" r="64.2" fill="none" stroke="#3fc7a1" stroke-width="17.4"/>
  </svg>
  <div class="t" style="left:46px;width:80px;text-align:center;top:116px;font-size:32px;color:#555">2</div>
  <div class="leg" style="top:69px;background:#3fc7a1"></div>
  <div class="leg" style="top:95px;background:#f94c4c"></div>
  <div class="leg" style="top:121px;background:#fb8a2e"></div>
  <div class="leg" style="top:146px;background:#aaaaaa"></div>
  <div class="leg" style="top:172px;background:#d68ee8"></div>
  <div class="ll" style="top:67px"><u>Normal</u><b>2</b></div>
  <div class="ll" style="top:93px"><u>Faulty</u><b>0</b></div>
  <div class="ll" style="top:119px"><u>Alarm</u><b>0</b></div>
  <div class="ll" style="top:145px"><u>Offline</u><b>0</b></div>
  <div class="ll" style="top:171px"><u>Unregistered</u><b>0</b></div>
  <div class="t" style="left:0;width:350px;text-align:center;top:224px;font-size:15px;font-weight:bold;color:#333">Alarm</div>
  <svg style="left:0;top:0" width="350" height="281" viewBox="295 257 350 281">
    <circle cx="327.4" cy="519" r="8.6" fill="#f0524f"/>
    <path d="M327.8 512.6 C329.6 515.4 332 516.8 331.6 520.6 C331.2 523.4 329.4 524.8 327.2 524.8 C324.8 524.8 323 523 323.2 520.4 C323.4 518.6 324.6 517.6 325.2 516.2 C325.8 517 326 517.8 326.2 518.6 C327.4 517 328 515 327.8 512.6 Z" fill="#fff"/>
    <path d="M327.6 519.6 C328.8 521 329 522.4 328.2 523.4 C327.4 524.2 326 523.8 325.8 522.6 C325.6 521.4 326.8 520.8 327.6 519.6 Z" fill="#f0524f"/>
    <circle cx="409" cy="519" r="8.6" fill="#f79a30"/>
    <path d="M410.8 512.8 L405.2 519.8 H408.6 L407 525.2 L412.8 517.8 H409.4 Z" fill="#fff"/>
    <circle cx="490.7" cy="519" r="8.6" fill="#e9e02a"/>
    <path d="M489.6 513.4 H491.8 L491.4 520.6 H490 Z" fill="#fff"/><circle cx="490.7" cy="523.2" r="1.3" fill="#fff"/>
    <circle cx="573.7" cy="519" r="8.6" fill="#29c0e8"/>
    <circle cx="573.7" cy="514.6" r="1.4" fill="#fff"/><rect x="572.5" y="517.2" width="2.4" height="7.2" fill="#fff"/>
  </svg>
  <div class="t" style="left:46px;top:253px;font-size:15px;color:#333">1</div>
  <div class="t" style="left:127px;top:253px;font-size:15px;color:#333">0</div>
  <div class="t" style="left:209px;top:253px;font-size:15px;color:#333">0</div>
  <div class="t" style="left:291px;top:253px;font-size:15px;color:#333">0</div>
</div>
<!-- bottom-left tools -->
<div style="position:absolute;left:12px;top:421px;width:33px;height:70px;background:#fff;box-shadow:0 0 3px rgba(0,0,0,.15)"></div>
<div style="position:absolute;left:13px;top:455px;width:32px;height:1px;background:#d8d8d8"></div>
<svg style="left:17px;top:428px" width="24" height="56" viewBox="300 618 24 56">
<path d="M303.2 634.6 V623.4 C306 622 308.4 622.6 310.8 624 C313.4 622.4 316 622.2 318.8 623.4 V628" fill="none" stroke="#666" stroke-width="1.7"/>
<path d="M303.2 634.2 C305.6 633.2 307.6 633.2 309.6 634" fill="none" stroke="#666" stroke-width="1.7"/>
<path d="M307 626.4 V630.4" stroke="#666" stroke-width="1.5"/>
<circle cx="315.6" cy="632.6" r="3" fill="none" stroke="#666" stroke-width="2.2"/>
<path d="M315.6 627.8 V637.4 M310.8 632.6 H320.4 M312.2 629.2 L319 636 M319 629.2 L312.2 636" stroke="#666" stroke-width="1.3"/>
<circle cx="315.6" cy="632.6" r="1" fill="#fff"/>
<path d="M302.6 667 V654.6 H316" fill="none" stroke="#777" stroke-width="1.2"/>
<rect x="305.2" y="657" width="14" height="11.6" fill="#aaa" stroke="#666" stroke-width="1.6"/>
<path d="M305.2 666 H319.2" stroke="#666" stroke-width="1.4"/>
<path d="M308 664 L310.6 660.6 L312.4 662.6 L315.6 659.2 L316.6 664 Z" fill="#ddd"/>
</svg>

</div></div>
</body>
</html>
